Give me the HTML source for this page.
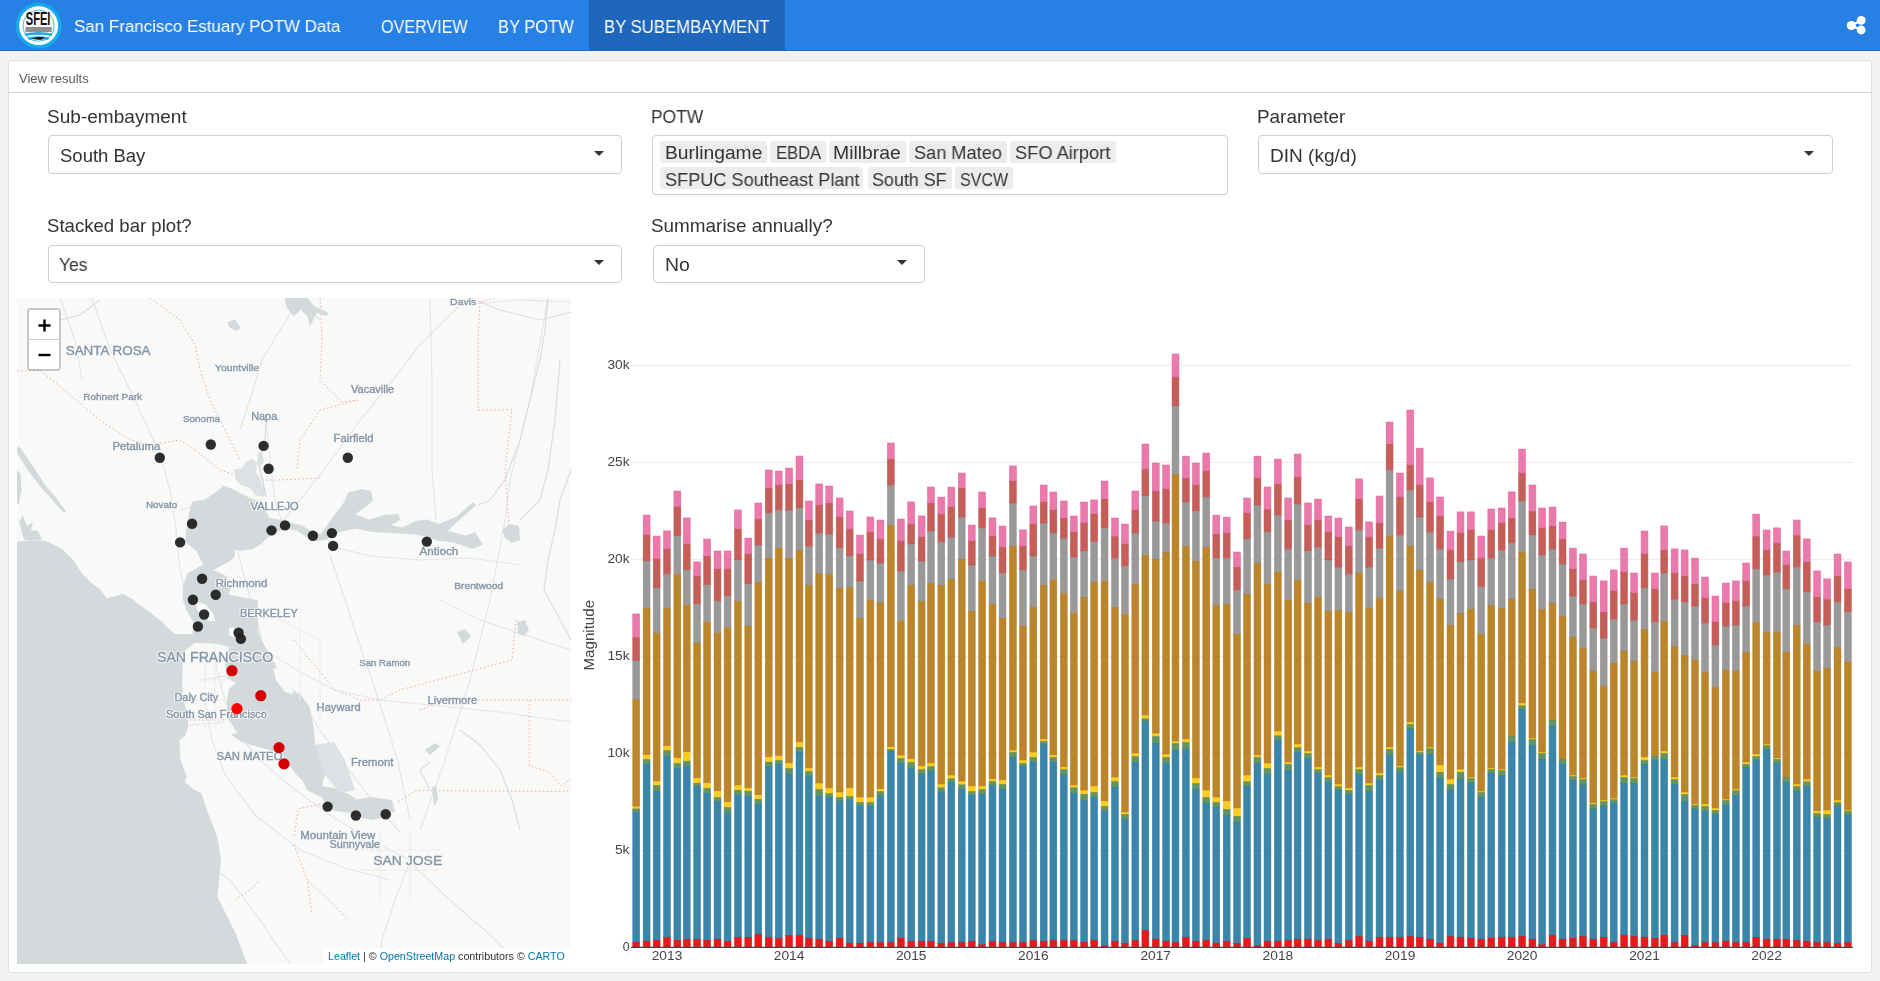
<!DOCTYPE html>
<html><head><meta charset="utf-8">
<style>
*{box-sizing:border-box;margin:0;padding:0}
html,body{width:1880px;height:981px;overflow:hidden;background:#f2f2f2;font-family:"Liberation Sans",sans-serif;color:#333}
.abs{position:absolute}
.t{position:absolute;white-space:nowrap;line-height:1;transform-origin:0 0;font-family:"Liberation Sans",sans-serif;will-change:transform}
#nav{position:absolute;left:0;top:0;width:1880px;height:51px;background:#2780e3;border-bottom:1px solid #1f6cc4}
#active{position:absolute;left:589px;top:0;width:196px;height:50px;background:#1f67bd}
.navt{position:absolute;color:#fff;white-space:nowrap;line-height:1}
#card{position:absolute;left:8px;top:60px;width:1864px;height:913px;background:#fff;border:1px solid #dfdfdf;border-radius:3px}
#hdr{position:absolute;left:0;top:0;width:1862px;height:32px;border-bottom:1px solid #d6d6d6}
.lbl{position:absolute;white-space:nowrap;font-size:18.5px;color:#333;line-height:1}
.sel{position:absolute;background:#fff;border:1px solid #cfcfcf;border-radius:4px}
.val{position:absolute;white-space:nowrap;font-size:18.5px;color:#333;line-height:1}
.caret{position:absolute;width:0;height:0;border-left:5px solid transparent;border-right:5px solid transparent;border-top:5px solid #333}
.tag{position:absolute;height:21.7px;background:#ececec;border-radius:3px;font-size:18.5px;line-height:21px;color:#333;text-align:center;white-space:nowrap;overflow:visible}
#map{position:absolute;left:17px;top:298px;width:554px;height:666px;overflow:hidden;background:#f9f9f8;will-change:transform}
svg text{font-family:"Liberation Sans",sans-serif}
</style></head><body>
<div id="nav">
  <div id="active"></div>
  <svg class="abs" style="left:15px;top:2px" width="48" height="48" viewBox="0 0 48 48">
    <circle cx="23.6" cy="23.7" r="23" fill="#14a9ec"/>
    <circle cx="23.6" cy="23.7" r="19.5" fill="#fff"/>
    <circle cx="23.6" cy="23.7" r="15.6" fill="none" stroke="#2bb3ee" stroke-width="0.9"/>
    <text x="10.8" y="22.6" textLength="24.6" lengthAdjust="spacingAndGlyphs" font-size="18" font-weight="bold" fill="#111" style="font-family:'Liberation Sans'">SFEI</text>
    <rect x="10.5" y="25" width="26.2" height="5" fill="#6a6a6a" opacity="0.75"/>
    <path d="M9.5 31.5 Q23.6 28.5 37.5 31.5 L36.5 34 Q23.6 31.5 10.5 34 Z" fill="#1aa9e8"/>
    <path d="M12.5 35.5 Q23.6 33 34.5 35.5 L33 38 Q23.6 36 14 38 Z" fill="#1aa9e8"/>
    <path d="M17 36.6 Q22 34.5 28 35.3 Q30 36 28 37.2 Q22 38.5 17 36.6 Z" fill="#111"/>
  </svg>
  <svg class="abs" style="left:1845px;top:14px" width="24" height="24" viewBox="0 0 24 24">
    <line x1="6.4" y1="11.5" x2="16.2" y2="6.4" stroke="#fff" stroke-width="2"/>
    <line x1="6.4" y1="11.5" x2="16.2" y2="16" stroke="#fff" stroke-width="2"/>
    <circle cx="6.4" cy="11.5" r="4.6" fill="#fff"/>
    <circle cx="16.2" cy="6.4" r="4.4" fill="#fff"/>
    <circle cx="16.2" cy="16" r="4.4" fill="#fff"/>
  </svg>
</div>

<div id="card"><div id="hdr"></div></div>

<div class="sel" style="left:47.5px;top:135px;width:574.5px;height:38.5px"></div>
<div class="caret" style="left:594px;top:151px"></div>

<div class="sel" style="left:651.8px;top:135px;width:576.2px;height:59.5px"></div>
<div class="tag" style="left:660.3px;top:141.1px;width:106.6px"></div><div class="tag" style="left:770.2px;top:141.1px;width:55.4px"></div><div class="tag" style="left:829.2px;top:141.1px;width:76.5px"></div><div class="tag" style="left:909.0px;top:141.1px;width:97.6px"></div><div class="tag" style="left:1010.0px;top:141.1px;width:105.5px"></div><div class="tag" style="left:660.3px;top:167.2px;width:203.2px"></div><div class="tag" style="left:867.5px;top:167.2px;width:84.1px"></div><div class="tag" style="left:955.2px;top:167.2px;width:57.4px"></div>

<div class="sel" style="left:1258px;top:135px;width:574.5px;height:38.5px"></div>
<div class="caret" style="left:1804px;top:151px"></div>

<div class="sel" style="left:47.5px;top:244.5px;width:574.5px;height:38px"></div>
<div class="caret" style="left:594px;top:260px"></div>

<div class="sel" style="left:652.5px;top:244.5px;width:272.5px;height:38px"></div>
<div class="caret" style="left:897px;top:260px"></div>

<div id="map">
<svg width="554" height="666" viewBox="17 298 554 666" style="position:absolute;left:0;top:0">
<path d="M215.0,660.0 L222.0,690.0 L235.0,730.0 L260.0,760.0 L295.0,790.0 L330.0,815.0 L370.0,840.0 L410.0,860.0" fill="none" stroke="#e4e5e6" stroke-width="1.2" />
<path d="M205.0,700.0 L212.0,740.0 L225.0,775.0 L255.0,815.0 L300.0,850.0 L345.0,868.0 L390.0,880.0" fill="none" stroke="#e4e5e6" stroke-width="1.2" />
<path d="M262.0,650.0 L280.0,672.0 L300.0,698.0 L320.0,730.0 L345.0,765.0 L372.0,800.0 L400.0,832.0" fill="none" stroke="#e4e5e6" stroke-width="1.2" />
<path d="M330.0,556.0 L345.0,600.0 L358.0,640.0 L372.0,680.0 L385.0,720.0 L398.0,762.0 L410.0,820.0" fill="none" stroke="#e4e5e6" stroke-width="1.2" />
<path d="M268.0,652.0 L300.0,672.0 L335.0,690.0 L380.0,700.0 L440.0,706.0 L500.0,712.0 L571.0,722.0" fill="none" stroke="#e4e5e6" stroke-width="1.2" />
<path d="M330.0,546.0 L370.0,556.0 L420.0,560.0 L470.0,558.0 L520.0,565.0" fill="none" stroke="#e4e5e6" stroke-width="1.2" />
<path d="M282.0,522.0 L300.0,500.0 L335.0,455.0 L360.0,420.0 L385.0,390.0 L420.0,345.0 L460.0,305.0 L520.0,300.0 L571.0,302.0" fill="none" stroke="#e4e5e6" stroke-width="1.2" />
<path d="M188.0,604.0 L180.0,570.0 L176.0,530.0 L170.0,490.0 L160.0,455.0 L135.0,400.0 L110.0,350.0 L92.0,298.0" fill="none" stroke="#e4e5e6" stroke-width="1.2" />
<path d="M180.0,510.0 L215.0,500.0 L262.0,500.0" fill="none" stroke="#e4e5e6" stroke-width="1.2" />
<path d="M266.0,420.0 L270.0,460.0 L275.0,500.0 L282.0,522.0" fill="none" stroke="#e4e5e6" stroke-width="1.2" />
<path d="M410.0,862.0 L395.0,900.0 L382.0,940.0 L378.0,964.0" fill="none" stroke="#e4e5e6" stroke-width="1.2" />
<path d="M410.0,862.0 L450.0,900.0 L490.0,935.0 L520.0,964.0" fill="none" stroke="#e4e5e6" stroke-width="1.2" />
<path d="M230.0,520.0 L240.0,560.0 L250.0,598.0 L258.0,630.0" fill="none" stroke="#e4e5e6" stroke-width="1.2" />
<path d="M430.0,298.0 L432.0,380.0 L432.0,470.0 L436.0,520.0" fill="none" stroke="#e4e5e6" stroke-width="1.2" />
<path d="M548.0,298.0 L530.0,400.0 L510.0,480.0 L505.0,520.0 L490.0,600.0 L470.0,680.0 L445.0,760.0 L420.0,830.0" fill="none" stroke="#e4e5e6" stroke-width="1.2" />
<path d="M300.0,298.0 L280.0,330.0 L262.0,360.0 L250.0,400.0 L240.0,430.0" fill="none" stroke="#e4e5e6" stroke-width="1.2" />
<path d="M60.0,298.0 L75.0,340.0 L82.0,380.0" fill="none" stroke="#e4e5e6" stroke-width="1.2" />
<path d="M440.0,600.0 L480.0,620.0 L540.0,640.0 L571.0,650.0" fill="none" stroke="#e4e5e6" stroke-width="1.2" />
<path d="M200.0,860.0 L230.0,880.0 L260.0,920.0 L290.0,964.0" fill="none" stroke="#e4e5e6" stroke-width="1.2" />
<path d="M190.0,725.0 L225.0,722.0" fill="none" stroke="#e4e5e6" stroke-width="1.2" />
<path d="M200.0,680.0 L225.0,676.0" fill="none" stroke="#e4e5e6" stroke-width="1.2" />
<path d="M230.0,600.0 L255.0,612.0 L262.0,640.0" fill="none" stroke="#e4e5e6" stroke-width="1.2" />
<path d="M470.0,298.0 L500.0,310.0 L540.0,320.0 L571.0,312.0" fill="none" stroke="#d9dee1" stroke-width="1.2" />
<path d="M548.0,298.0 L545.0,330.0 L540.0,360.0 L530.0,400.0 L520.0,440.0 L505.0,480.0 L490.0,500.0 L478.0,505.0" fill="none" stroke="#d9dee1" stroke-width="1.2" />
<path d="M560.0,360.0 L555.0,420.0 L548.0,470.0 L540.0,500.0 L520.0,520.0" fill="none" stroke="#d9dee1" stroke-width="1.2" />
<path d="M571.0,470.0 L560.0,500.0 L555.0,530.0 L548.0,560.0 L544.0,590.0 L560.0,620.0 L571.0,640.0" fill="none" stroke="#d9dee1" stroke-width="1.2" />
<path d="M460.0,730.0 L480.0,745.0 L500.0,770.0 L512.0,800.0 L520.0,830.0" fill="none" stroke="#d9dee1" stroke-width="1.2" />
<path d="M430.0,762.0 L420.0,770.0 L430.0,790.0" fill="none" stroke="#d9dee1" stroke-width="1.2" />
<path d="M300.0,298.0 L310.0,310.0 L320.0,320.0" fill="none" stroke="#d9dee1" stroke-width="1.2" />
<path d="M60.0,320.0 L80.0,315.0 L100.0,300.0" fill="none" stroke="#d9dee1" stroke-width="1.2" />
<path d="M17.0,371.0 L40.0,370.0 L70.0,395.0 L100.0,420.0 L130.0,440.0 L150.0,445.0 L180.0,440.0 L195.0,450.0" fill="none" stroke="#e8aaaa" stroke-width="1" stroke-dasharray="1.5,2.5"/>
<path d="M150.0,298.0 L180.0,320.0 L195.0,345.0 L200.0,370.0 L210.0,400.0 L225.0,430.0 L240.0,460.0" fill="none" stroke="#e8aaaa" stroke-width="1" stroke-dasharray="1.5,2.5"/>
<path d="M195.0,450.0 L220.0,470.0 L250.0,480.0 L280.0,480.0 L320.0,478.0" fill="none" stroke="#e8aaaa" stroke-width="1" stroke-dasharray="1.5,2.5"/>
<path d="M320.0,298.0 L322.0,340.0 L320.0,380.0 L342.0,402.0 L358.0,400.0 L320.0,410.0 L300.0,440.0 L297.0,470.0" fill="none" stroke="#e8aaaa" stroke-width="1" stroke-dasharray="1.5,2.5"/>
<path d="M495.0,298.0 L480.0,302.0 L478.0,340.0 L478.0,410.0 L500.0,410.0 L512.0,410.0 L505.0,470.0 L510.0,540.0" fill="none" stroke="#e8aaaa" stroke-width="1" stroke-dasharray="1.5,2.5"/>
<path d="M516.0,620.0 L512.0,660.0 L400.0,690.0 L380.0,700.0" fill="none" stroke="#e8aaaa" stroke-width="1" stroke-dasharray="1.5,2.5"/>
<path d="M294.0,640.0 L310.0,660.0 L335.0,690.0 L360.0,700.0 L380.0,700.0" fill="none" stroke="#e8aaaa" stroke-width="1" stroke-dasharray="1.5,2.5"/>
<path d="M420.0,710.0 L445.0,700.0 L571.0,700.0" fill="none" stroke="#e8aaaa" stroke-width="1" stroke-dasharray="1.5,2.5"/>
<path d="M398.1,801.8 L416.2,790.5 L561.0,791.6 L571.0,790.5" fill="none" stroke="#e8aaaa" stroke-width="1" stroke-dasharray="1.5,2.5"/>
<path d="M529.3,700.0 L529.3,765.6 L549.7,772.4 L561.0,786.0 L571.0,779.2" fill="none" stroke="#e8aaaa" stroke-width="1" stroke-dasharray="1.5,2.5"/>
<path d="M294.0,835.8 L298.5,808.6 L321.2,804.1" fill="none" stroke="#e8aaaa" stroke-width="1" stroke-dasharray="1.5,2.5"/>
<path d="M294.0,844.8 L300.8,862.9 L307.6,881.0 L312.1,915.0" fill="none" stroke="#e8aaaa" stroke-width="1" stroke-dasharray="1.5,2.5"/>
<path d="M307.6,881.0 L328.0,899.1 L350.6,922.0" fill="none" stroke="#e8aaaa" stroke-width="1" stroke-dasharray="1.5,2.5"/>
<path d="M190.0,720.0 L225.0,720.0" fill="none" stroke="#e8aaaa" stroke-width="1" stroke-dasharray="1.5,2.5"/>
<path d="M235.0,900.0 L250.0,890.0 L260.0,880.0" fill="none" stroke="#e8aaaa" stroke-width="1" stroke-dasharray="1.5,2.5"/>
<path d="M17.0,542.1 L30.5,539.9 L46.1,541.0 L61.8,548.8 L73.1,560.0 L82.0,573.5 L91.0,582.5 L100.0,589.2 L106.7,598.2 L115.7,595.9 L122.4,593.7 L131.3,598.2 L142.6,607.1 L160.5,620.6 L174.7,634.0 L187.4,634.0 L192.6,634.0 L193.4,622.6 L186.9,611.2 L182.9,600.0 L182.9,587.0 L187.4,573.5 L203.1,564.5 L196.4,551.1 L185.2,542.1 L187.4,519.7 L191.9,501.7 L205.0,499.4 L219.7,489.3 L223.4,485.6 L230.7,488.3 L245.4,495.7 L258.3,502.1 L265.6,510.4 L269.3,517.7 L278.4,519.5 L289.4,522.3 L300.5,525.0 L311.5,530.6 L320.6,534.2 L323.4,530.9 L330.2,520.7 L343.8,502.6 L348.3,492.4 L361.9,489.0 L370.9,491.3 L373.2,500.4 L364.2,508.3 L355.1,513.9 L368.7,519.6 L384.5,515.1 L398.1,513.9 L400.4,519.6 L391.3,525.3 L402.6,527.5 L416.2,520.7 L427.5,519.6 L438.8,524.1 L456.9,516.2 L472.8,502.6 L476.2,504.9 L456.9,521.9 L447.9,530.9 L466.0,535.4 L475.0,532.0 L483.0,544.5 L472.8,549.0 L452.4,542.2 L438.8,541.1 L425.3,536.6 L413.9,534.3 L395.8,533.2 L373.2,532.0 L355.1,528.7 L339.3,532.0 L325.7,540.0 L316.6,541.1 L307.8,537.9 L296.8,530.6 L285.8,529.6 L276.6,531.5 L267.4,537.9 L261.9,543.4 L252.8,548.9 L241.7,550.7 L234.4,549.8 L235.3,556.2 L228.9,561.7 L221.6,565.4 L213.3,570.0 L219.7,572.8 L227.1,576.4 L230.7,587.4 L228.9,594.8 L238.1,596.6 L249.1,598.4 L257.9,600.6 L257.9,630.8 L262.0,641.0 L268.0,652.0 L274.8,663.0 L278.4,674.0 L289.4,679.5 L291.3,690.6 L300.5,694.2 L309.6,707.1 L313.3,725.4 L315.1,743.8 L322.5,758.4 L328.0,767.9 L323.4,779.2 L322.3,786.0 L334.7,788.3 L350.6,795.0 L359.6,801.8 L368.7,801.8 L380.0,804.1 L391.3,806.4 L391.3,815.4 L373.2,819.9 L361.9,817.7 L350.6,813.1 L334.7,810.9 L328.0,806.4 L321.2,797.3 L307.6,790.5 L302.3,780.5 L296.8,775.0 L289.4,765.8 L282.1,754.8 L267.4,749.3 L252.8,745.6 L241.7,741.9 L230.7,734.6 L238.1,732.8 L232.6,725.4 L227.1,718.1 L227.1,699.7 L228.9,688.7 L236.2,683.2 L227.1,677.7 L225.2,664.9 L229.3,647.1 L217.1,643.8 L194.3,643.0 L183.0,652.0 L182.1,685.0 L183.0,699.7 L186.7,710.7 L188.5,725.4 L184.9,736.4 L179.4,740.1 L180.3,758.4 L186.7,776.8 L184.9,782.3 L194.0,789.6 L201.4,793.3 L206.9,810.0 L217.4,837.5 L221.0,859.7 L217.4,896.8 L236.0,934.0 L247.0,964.0 L17.0,964.0 Z" fill="#d4dadc"/>
<path d="M234.0,470.0 L242.0,468.0 L246.0,462.0 L252.0,459.0 L257.0,463.0 L256.0,472.0 L260.0,478.0 L262.0,486.0 L266.0,490.0 L264.0,497.0 L255.0,495.0 L250.0,488.0 L244.0,486.0 L238.0,483.0 L235.0,477.0 Z" fill="#dde1e3"/>
<path d="M257.0,453.0 L262.0,452.0 L264.0,462.0 L260.0,466.0 Z" fill="#dde1e3"/>
<path d="M253.0,488.0 L258.0,486.0 L263.0,493.0 L256.0,494.0 Z" fill="#dde1e3"/>
<path d="M266.0,423.0 L265.0,440.0 L262.0,452.0 L258.0,462.0 L262.0,478.0 L266.0,497.0" fill="none" stroke="#d4dadc" stroke-width="1.3" />
<path d="M315.0,745.0 L334.0,742.0 L345.0,760.0 L355.0,790.0 L340.0,793.0 L325.0,775.0 Z" fill="#dde1e3"/>
<path d="M17.0,446.8 L19.5,446.8 L31.7,464.6 L45.1,484.8 L56.4,498.3 L66.3,511.7 L64.1,513.1 L53.9,501.7 L40.4,487.1 L27.0,468.9 L17.0,452.7 Z" fill="#d4dadc"/>
<path d="M17.0,470.0 L20.5,474.0 L21.5,490.0 L19.0,504.0 L17.0,504.0 Z" fill="#d4dadc"/>
<path d="M19.0,522.0 L23.0,515.0 L27.0,526.0 L33.0,522.0 L31.0,530.0 L38.0,531.0 L42.0,540.0 L24.0,540.0 Z" fill="#d4dadc"/>
<path d="M285.0,298.0 L307.6,298.0 L314.4,306.0 L328.0,312.8 L326.8,316.4 L316.6,312.8 L312.1,322.2 L309.8,326.5 L307.6,316.4 L300.5,309.6 L294.0,316.6 L290.0,312.0 L286.0,306.0 Z" fill="#d4dadc"/>
<path d="M227.5,322.0 L235.0,319.5 L241.0,328.0 L236.0,331.0 L229.0,327.0 Z" fill="#d4dadc"/>
<path d="M502.0,530.0 L510.0,524.0 L519.0,526.0 L520.0,540.0 L512.0,543.0 L505.0,538.0 Z" fill="#d4dadc"/>
<path d="M517.0,622.0 L525.0,620.0 L529.0,630.0 L524.0,636.0 L518.0,634.0 Z" fill="#d4dadc"/>
<path d="M457.0,632.0 L465.0,629.0 L471.0,636.0 L463.0,644.0 Z" fill="#d4dadc"/>
<path d="M425.0,750.0 L435.0,743.0 L440.0,746.0 L430.0,755.0 Z" fill="#d4dadc"/>
<path d="M432.0,788.0 L436.0,785.0 L438.0,800.0 L434.0,806.0 Z" fill="#d4dadc"/>
<path d="M355.0,800.0 L370.0,797.0 L392.0,800.0 L395.0,812.0 L375.0,815.0 Z" fill="#d4dadc"/>
<path d="M195.9,600.6 L205.7,604.7 L213.0,613.7 L215.5,621.0 L208.9,621.0 L200.8,616.1 L196.7,608.8 Z" fill="#f9f9f8"/>
<path d="M229.0,628.0 L234.0,627.0 L236.0,633.0 L233.0,637.0 L229.0,635.0 Z" fill="#f9f9f8"/>
<path d="M273.0,668.0 L282.0,670.0 L292.0,684.0 L293.0,694.0 L285.0,692.0 L276.0,680.0 Z" fill="#f9f9f8"/>
<line x1="194" y1="660" x2="225" y2="660" stroke="#ebebeb" stroke-width="1"/>
<line x1="194" y1="680" x2="225" y2="680" stroke="#ebebeb" stroke-width="1"/>
<line x1="190" y1="700" x2="227" y2="700" stroke="#ebebeb" stroke-width="1"/>
<line x1="205" y1="645" x2="205" y2="730" stroke="#ebebeb" stroke-width="1"/>
<line x1="215" y1="645" x2="215" y2="730" stroke="#ebebeb" stroke-width="1"/>
<line x1="360" y1="850" x2="440" y2="850" stroke="#ebebeb" stroke-width="1"/>
<line x1="360" y1="870" x2="440" y2="870" stroke="#ebebeb" stroke-width="1"/>
<line x1="380" y1="830" x2="380" y2="900" stroke="#ebebeb" stroke-width="1"/>
<line x1="410" y1="830" x2="410" y2="900" stroke="#ebebeb" stroke-width="1"/>
<line x1="260" y1="610" x2="320" y2="640" stroke="#ebebeb" stroke-width="1"/>
<line x1="300" y1="620" x2="300" y2="700" stroke="#ebebeb" stroke-width="1"/>
<line x1="320" y1="640" x2="320" y2="720" stroke="#ebebeb" stroke-width="1"/>
<text x="65.7" y="355.3" textLength="84.9" lengthAdjust="spacingAndGlyphs" font-size="13" fill="none" stroke="#fafafa" stroke-width="2.2" stroke-linejoin="round" style="font-family:'Liberation Sans'">SANTA ROSA</text>
<text x="65.7" y="355.3" textLength="84.9" lengthAdjust="spacingAndGlyphs" font-size="13" fill="#8494a6" stroke="#8494a6" stroke-width="0.35" style="font-family:'Liberation Sans'">SANTA ROSA</text>
<text x="215" y="370.9" textLength="44" lengthAdjust="spacingAndGlyphs" font-size="9.5" fill="none" stroke="#fafafa" stroke-width="2.2" stroke-linejoin="round" style="font-family:'Liberation Sans'">Yountville</text>
<text x="215" y="370.9" textLength="44" lengthAdjust="spacingAndGlyphs" font-size="9.5" fill="#8494a6" stroke="#8494a6" stroke-width="0.35" style="font-family:'Liberation Sans'">Yountville</text>
<text x="83.3" y="399.8" textLength="58.8" lengthAdjust="spacingAndGlyphs" font-size="9.5" fill="none" stroke="#fafafa" stroke-width="2.2" stroke-linejoin="round" style="font-family:'Liberation Sans'">Rohnert Park</text>
<text x="83.3" y="399.8" textLength="58.8" lengthAdjust="spacingAndGlyphs" font-size="9.5" fill="#8494a6" stroke="#8494a6" stroke-width="0.35" style="font-family:'Liberation Sans'">Rohnert Park</text>
<text x="182.9" y="422" textLength="37.1" lengthAdjust="spacingAndGlyphs" font-size="9.5" fill="none" stroke="#fafafa" stroke-width="2.2" stroke-linejoin="round" style="font-family:'Liberation Sans'">Sonoma</text>
<text x="182.9" y="422" textLength="37.1" lengthAdjust="spacingAndGlyphs" font-size="9.5" fill="#8494a6" stroke="#8494a6" stroke-width="0.35" style="font-family:'Liberation Sans'">Sonoma</text>
<text x="251.2" y="420.2" textLength="26" lengthAdjust="spacingAndGlyphs" font-size="10.5" fill="none" stroke="#fafafa" stroke-width="2.2" stroke-linejoin="round" style="font-family:'Liberation Sans'">Napa</text>
<text x="251.2" y="420.2" textLength="26" lengthAdjust="spacingAndGlyphs" font-size="10.5" fill="#8494a6" stroke="#8494a6" stroke-width="0.35" style="font-family:'Liberation Sans'">Napa</text>
<text x="112.5" y="449.6" textLength="47.7" lengthAdjust="spacingAndGlyphs" font-size="10.5" fill="none" stroke="#fafafa" stroke-width="2.2" stroke-linejoin="round" style="font-family:'Liberation Sans'">Petaluma</text>
<text x="112.5" y="449.6" textLength="47.7" lengthAdjust="spacingAndGlyphs" font-size="10.5" fill="#8494a6" stroke="#8494a6" stroke-width="0.35" style="font-family:'Liberation Sans'">Petaluma</text>
<text x="146" y="508" textLength="31.2" lengthAdjust="spacingAndGlyphs" font-size="9.3" fill="none" stroke="#fafafa" stroke-width="2.2" stroke-linejoin="round" style="font-family:'Liberation Sans'">Novato</text>
<text x="146" y="508" textLength="31.2" lengthAdjust="spacingAndGlyphs" font-size="9.3" fill="#8494a6" stroke="#8494a6" stroke-width="0.35" style="font-family:'Liberation Sans'">Novato</text>
<text x="250.6" y="510" textLength="48" lengthAdjust="spacingAndGlyphs" font-size="10.6" fill="none" stroke="#fafafa" stroke-width="2.2" stroke-linejoin="round" style="font-family:'Liberation Sans'">VALLEJO</text>
<text x="250.6" y="510" textLength="48" lengthAdjust="spacingAndGlyphs" font-size="10.6" fill="#8494a6" stroke="#8494a6" stroke-width="0.35" style="font-family:'Liberation Sans'">VALLEJO</text>
<text x="450.1" y="305.2" textLength="26.1" lengthAdjust="spacingAndGlyphs" font-size="9.8" fill="none" stroke="#fafafa" stroke-width="2.2" stroke-linejoin="round" style="font-family:'Liberation Sans'">Davis</text>
<text x="450.1" y="305.2" textLength="26.1" lengthAdjust="spacingAndGlyphs" font-size="9.8" fill="#8494a6" stroke="#8494a6" stroke-width="0.35" style="font-family:'Liberation Sans'">Davis</text>
<text x="351" y="392.6" textLength="43.2" lengthAdjust="spacingAndGlyphs" font-size="10.2" fill="none" stroke="#fafafa" stroke-width="2.2" stroke-linejoin="round" style="font-family:'Liberation Sans'">Vacaville</text>
<text x="351" y="392.6" textLength="43.2" lengthAdjust="spacingAndGlyphs" font-size="10.2" fill="#8494a6" stroke="#8494a6" stroke-width="0.35" style="font-family:'Liberation Sans'">Vacaville</text>
<text x="333.6" y="442.4" textLength="40" lengthAdjust="spacingAndGlyphs" font-size="10.3" fill="none" stroke="#fafafa" stroke-width="2.2" stroke-linejoin="round" style="font-family:'Liberation Sans'">Fairfield</text>
<text x="333.6" y="442.4" textLength="40" lengthAdjust="spacingAndGlyphs" font-size="10.3" fill="#8494a6" stroke="#8494a6" stroke-width="0.35" style="font-family:'Liberation Sans'">Fairfield</text>
<text x="419.6" y="555.1" textLength="38.5" lengthAdjust="spacingAndGlyphs" font-size="10.3" fill="none" stroke="#fafafa" stroke-width="2.2" stroke-linejoin="round" style="font-family:'Liberation Sans'">Antioch</text>
<text x="419.6" y="555.1" textLength="38.5" lengthAdjust="spacingAndGlyphs" font-size="10.3" fill="#8494a6" stroke="#8494a6" stroke-width="0.35" style="font-family:'Liberation Sans'">Antioch</text>
<text x="454.2" y="589" textLength="49" lengthAdjust="spacingAndGlyphs" font-size="9.4" fill="none" stroke="#fafafa" stroke-width="2.2" stroke-linejoin="round" style="font-family:'Liberation Sans'">Brentwood</text>
<text x="454.2" y="589" textLength="49" lengthAdjust="spacingAndGlyphs" font-size="9.4" fill="#8494a6" stroke="#8494a6" stroke-width="0.35" style="font-family:'Liberation Sans'">Brentwood</text>
<text x="215.7" y="587.4" textLength="51.7" lengthAdjust="spacingAndGlyphs" font-size="10.6" fill="none" stroke="#fafafa" stroke-width="2.2" stroke-linejoin="round" style="font-family:'Liberation Sans'">Richmond</text>
<text x="215.7" y="587.4" textLength="51.7" lengthAdjust="spacingAndGlyphs" font-size="10.6" fill="#8494a6" stroke="#8494a6" stroke-width="0.35" style="font-family:'Liberation Sans'">Richmond</text>
<text x="239.9" y="617.2" textLength="57.8" lengthAdjust="spacingAndGlyphs" font-size="10.6" fill="none" stroke="#fafafa" stroke-width="2.2" stroke-linejoin="round" style="font-family:'Liberation Sans'">BERKELEY</text>
<text x="239.9" y="617.2" textLength="57.8" lengthAdjust="spacingAndGlyphs" font-size="10.6" fill="#8494a6" stroke="#8494a6" stroke-width="0.35" style="font-family:'Liberation Sans'">BERKELEY</text>
<text x="157" y="661.6" textLength="116.3" lengthAdjust="spacingAndGlyphs" font-size="14" fill="none" stroke="#fafafa" stroke-width="2.2" stroke-linejoin="round" style="font-family:'Liberation Sans'">SAN FRANCISCO</text>
<text x="157" y="661.6" textLength="116.3" lengthAdjust="spacingAndGlyphs" font-size="14" fill="#8494a6" stroke="#8494a6" stroke-width="0.35" style="font-family:'Liberation Sans'">SAN FRANCISCO</text>
<text x="359.2" y="666" textLength="51" lengthAdjust="spacingAndGlyphs" font-size="9.3" fill="none" stroke="#fafafa" stroke-width="2.2" stroke-linejoin="round" style="font-family:'Liberation Sans'">San Ramon</text>
<text x="359.2" y="666" textLength="51" lengthAdjust="spacingAndGlyphs" font-size="9.3" fill="#8494a6" stroke="#8494a6" stroke-width="0.35" style="font-family:'Liberation Sans'">San Ramon</text>
<text x="174.4" y="700.6" textLength="43.9" lengthAdjust="spacingAndGlyphs" font-size="10.2" fill="none" stroke="#fafafa" stroke-width="2.2" stroke-linejoin="round" style="font-family:'Liberation Sans'">Daly City</text>
<text x="174.4" y="700.6" textLength="43.9" lengthAdjust="spacingAndGlyphs" font-size="10.2" fill="#8494a6" stroke="#8494a6" stroke-width="0.35" style="font-family:'Liberation Sans'">Daly City</text>
<text x="427.5" y="704" textLength="49.8" lengthAdjust="spacingAndGlyphs" font-size="10.3" fill="none" stroke="#fafafa" stroke-width="2.2" stroke-linejoin="round" style="font-family:'Liberation Sans'">Livermore</text>
<text x="427.5" y="704" textLength="49.8" lengthAdjust="spacingAndGlyphs" font-size="10.3" fill="#8494a6" stroke="#8494a6" stroke-width="0.35" style="font-family:'Liberation Sans'">Livermore</text>
<text x="316.6" y="710.9" textLength="44" lengthAdjust="spacingAndGlyphs" font-size="10.5" fill="none" stroke="#fafafa" stroke-width="2.2" stroke-linejoin="round" style="font-family:'Liberation Sans'">Hayward</text>
<text x="316.6" y="710.9" textLength="44" lengthAdjust="spacingAndGlyphs" font-size="10.5" fill="#8494a6" stroke="#8494a6" stroke-width="0.35" style="font-family:'Liberation Sans'">Hayward</text>
<text x="166.1" y="717.7" textLength="100.7" lengthAdjust="spacingAndGlyphs" font-size="10.1" fill="none" stroke="#fafafa" stroke-width="2.2" stroke-linejoin="round" style="font-family:'Liberation Sans'">South San Francisco</text>
<text x="166.1" y="717.7" textLength="100.7" lengthAdjust="spacingAndGlyphs" font-size="10.1" fill="#8494a6" stroke="#8494a6" stroke-width="0.35" style="font-family:'Liberation Sans'">South San Francisco</text>
<text x="216.6" y="759.7" textLength="65.9" lengthAdjust="spacingAndGlyphs" font-size="11" fill="none" stroke="#fafafa" stroke-width="2.2" stroke-linejoin="round" style="font-family:'Liberation Sans'">SAN MATEO</text>
<text x="216.6" y="759.7" textLength="65.9" lengthAdjust="spacingAndGlyphs" font-size="11" fill="#8494a6" stroke="#8494a6" stroke-width="0.35" style="font-family:'Liberation Sans'">SAN MATEO</text>
<text x="351" y="765.6" textLength="42.5" lengthAdjust="spacingAndGlyphs" font-size="10.6" fill="none" stroke="#fafafa" stroke-width="2.2" stroke-linejoin="round" style="font-family:'Liberation Sans'">Fremont</text>
<text x="351" y="765.6" textLength="42.5" lengthAdjust="spacingAndGlyphs" font-size="10.6" fill="#8494a6" stroke="#8494a6" stroke-width="0.35" style="font-family:'Liberation Sans'">Fremont</text>
<text x="300.3" y="838.5" textLength="75" lengthAdjust="spacingAndGlyphs" font-size="10.7" fill="none" stroke="#fafafa" stroke-width="2.2" stroke-linejoin="round" style="font-family:'Liberation Sans'">Mountain View</text>
<text x="300.3" y="838.5" textLength="75" lengthAdjust="spacingAndGlyphs" font-size="10.7" fill="#8494a6" stroke="#8494a6" stroke-width="0.35" style="font-family:'Liberation Sans'">Mountain View</text>
<text x="329.5" y="848.2" textLength="50.5" lengthAdjust="spacingAndGlyphs" font-size="10.1" fill="none" stroke="#fafafa" stroke-width="2.2" stroke-linejoin="round" style="font-family:'Liberation Sans'">Sunnyvale</text>
<text x="329.5" y="848.2" textLength="50.5" lengthAdjust="spacingAndGlyphs" font-size="10.1" fill="#8494a6" stroke="#8494a6" stroke-width="0.35" style="font-family:'Liberation Sans'">Sunnyvale</text>
<text x="373.2" y="864.7" textLength="69" lengthAdjust="spacingAndGlyphs" font-size="13.6" fill="none" stroke="#fafafa" stroke-width="2.2" stroke-linejoin="round" style="font-family:'Liberation Sans'">SAN JOSE</text>
<text x="373.2" y="864.7" textLength="69" lengthAdjust="spacingAndGlyphs" font-size="13.6" fill="#8494a6" stroke="#8494a6" stroke-width="0.35" style="font-family:'Liberation Sans'">SAN JOSE</text>
<circle cx="159.8" cy="457.7" r="5.2" fill="#222" fill-opacity="0.95"/>
<circle cx="210.8" cy="444.5" r="5.2" fill="#222" fill-opacity="0.95"/>
<circle cx="263.6" cy="445.9" r="5.2" fill="#222" fill-opacity="0.95"/>
<circle cx="268.6" cy="468.7" r="5.2" fill="#222" fill-opacity="0.95"/>
<circle cx="347.8" cy="457.7" r="5.2" fill="#222" fill-opacity="0.95"/>
<circle cx="192.1" cy="523.8" r="5.2" fill="#222" fill-opacity="0.95"/>
<circle cx="180.1" cy="542.4" r="5.2" fill="#222" fill-opacity="0.95"/>
<circle cx="271.5" cy="530.4" r="5.2" fill="#222" fill-opacity="0.95"/>
<circle cx="285" cy="525.4" r="5.2" fill="#222" fill-opacity="0.95"/>
<circle cx="312.9" cy="535.8" r="5.2" fill="#222" fill-opacity="0.95"/>
<circle cx="331.9" cy="533.1" r="5.2" fill="#222" fill-opacity="0.95"/>
<circle cx="333.1" cy="545.9" r="5.2" fill="#222" fill-opacity="0.95"/>
<circle cx="426.8" cy="541.6" r="5.2" fill="#222" fill-opacity="0.95"/>
<circle cx="202.1" cy="578.8" r="5.2" fill="#222" fill-opacity="0.95"/>
<circle cx="215.7" cy="594.7" r="5.2" fill="#222" fill-opacity="0.95"/>
<circle cx="192.9" cy="599.7" r="5.2" fill="#222" fill-opacity="0.95"/>
<circle cx="204.1" cy="614.5" r="5.2" fill="#222" fill-opacity="0.95"/>
<circle cx="197.9" cy="626.5" r="5.2" fill="#222" fill-opacity="0.95"/>
<circle cx="238.6" cy="632.7" r="5.2" fill="#222" fill-opacity="0.95"/>
<circle cx="240.9" cy="638.9" r="5.2" fill="#222" fill-opacity="0.95"/>
<circle cx="327.6" cy="806.6" r="5.2" fill="#222" fill-opacity="0.95"/>
<circle cx="355.9" cy="815.5" r="5.2" fill="#222" fill-opacity="0.95"/>
<circle cx="385.7" cy="814.3" r="5.2" fill="#222" fill-opacity="0.95"/>
<circle cx="232" cy="670.7" r="5.6" fill="#d40000"/>
<circle cx="260.8" cy="695.7" r="5.6" fill="#d40000"/>
<circle cx="279" cy="747.6" r="5.6" fill="#d40000"/>
<circle cx="284" cy="763.9" r="5.6" fill="#d40000"/>
<circle cx="237" cy="708.7" r="5.6" fill="#ff0000"/>
</svg>
<div style="position:absolute;left:10px;top:10px;width:34px;height:63px;border:2px solid rgba(0,0,0,0.2);border-radius:4px;background-clip:padding-box"><div style="position:absolute;left:0;top:0;width:30px;height:30px;background:#fff;border-bottom:1px solid #ccc;border-radius:2px 2px 0 0"></div><div style="position:absolute;left:0;top:30px;width:30px;height:29px;background:#fff;border-radius:0 0 2px 2px"></div><svg style="position:absolute;left:0;top:0" width="30" height="59"><path d="M9.5 15.5 H21.5 M15.5 9.5 V21.5" stroke="#000" stroke-width="2.4"/><path d="M9.5 45 H21.5" stroke="#000" stroke-width="2.4"/></svg></div>
<div style="position:absolute;right:0;bottom:0;height:16px;width:248px;background:rgba(255,255,255,0.8)"></div>
<div style="position:absolute;left:311px;top:653px;font-size:10.7px;line-height:1;white-space:nowrap;color:#333;font-family:'Liberation Sans'"><span style="color:#0078a8">Leaflet</span> | © <span style="color:#0078a8">OpenStreetMap</span> contributors © <span style="color:#0078a8">CARTO</span></div>
</div>

<svg class="abs" style="left:0;top:0;will-change:transform" width="1880" height="981" viewBox="0 0 1880 981" pointer-events="none">
<g><line x1="631" x2="1853" y1="850.4" y2="850.4" stroke="#ebebeb" stroke-width="1"/><line x1="631" x2="1853" y1="753.4" y2="753.4" stroke="#ebebeb" stroke-width="1"/><line x1="631" x2="1853" y1="656.4" y2="656.4" stroke="#ebebeb" stroke-width="1"/><line x1="631" x2="1853" y1="559.4" y2="559.4" stroke="#ebebeb" stroke-width="1"/><line x1="631" x2="1853" y1="462.4" y2="462.4" stroke="#ebebeb" stroke-width="1"/><line x1="631" x2="1853" y1="365.4" y2="365.4" stroke="#ebebeb" stroke-width="1"/></g>
<g><rect x="632.77" y="942.00" width="6.90" height="5.40" fill="#e41a1c" stroke="#e3100f" stroke-width="0.5"/>
<rect x="632.77" y="811.90" width="6.90" height="130.10" fill="#3a85a8" stroke="#2e7fab" stroke-width="0.5"/>
<rect x="632.77" y="808.20" width="6.90" height="3.70" fill="#629363" stroke="#58905e" stroke-width="0.5"/>
<rect x="632.77" y="806.20" width="6.90" height="2.00" fill="#fecb23" stroke="#ffc50f" stroke-width="0.5"/>
<rect x="632.77" y="699.10" width="6.90" height="107.10" fill="#bb852b" stroke="#b77c1d" stroke-width="0.5"/>
<rect x="632.77" y="660.70" width="6.90" height="38.40" fill="#999999" stroke="#949494" stroke-width="0.5"/>
<rect x="632.77" y="637.20" width="6.90" height="23.50" fill="#c55e58" stroke="#c4544f" stroke-width="0.5"/>
<rect x="632.77" y="613.90" width="6.90" height="23.30" fill="#e97aab" stroke="#e8639c" stroke-width="0.5"/>
<rect x="643.14" y="941.00" width="6.90" height="6.40" fill="#e41a1c" stroke="#e3100f" stroke-width="0.5"/>
<rect x="643.14" y="763.90" width="6.90" height="177.10" fill="#3a85a8" stroke="#2e7fab" stroke-width="0.5"/>
<rect x="643.14" y="759.00" width="6.90" height="4.90" fill="#629363" stroke="#58905e" stroke-width="0.5"/>
<rect x="643.14" y="754.60" width="6.90" height="4.40" fill="#fecb23" stroke="#ffc50f" stroke-width="0.5"/>
<rect x="643.14" y="607.80" width="6.90" height="146.80" fill="#bb852b" stroke="#b77c1d" stroke-width="0.5"/>
<rect x="643.14" y="560.90" width="6.90" height="46.90" fill="#999999" stroke="#949494" stroke-width="0.5"/>
<rect x="643.14" y="534.80" width="6.90" height="26.10" fill="#c55e58" stroke="#c4544f" stroke-width="0.5"/>
<rect x="643.14" y="515.00" width="6.90" height="19.80" fill="#e97aab" stroke="#e8639c" stroke-width="0.5"/>
<rect x="653.18" y="939.90" width="6.90" height="7.50" fill="#e41a1c" stroke="#e3100f" stroke-width="0.5"/>
<rect x="653.18" y="790.80" width="6.90" height="149.10" fill="#3a85a8" stroke="#2e7fab" stroke-width="0.5"/>
<rect x="653.18" y="785.00" width="6.90" height="5.80" fill="#629363" stroke="#58905e" stroke-width="0.5"/>
<rect x="653.18" y="781.00" width="6.90" height="4.00" fill="#fecb23" stroke="#ffc50f" stroke-width="0.5"/>
<rect x="653.18" y="632.60" width="6.90" height="148.40" fill="#bb852b" stroke="#b77c1d" stroke-width="0.5"/>
<rect x="653.18" y="587.80" width="6.90" height="44.80" fill="#999999" stroke="#949494" stroke-width="0.5"/>
<rect x="653.18" y="558.80" width="6.90" height="29.00" fill="#c55e58" stroke="#c4544f" stroke-width="0.5"/>
<rect x="653.18" y="536.00" width="6.90" height="22.80" fill="#e97aab" stroke="#e8639c" stroke-width="0.5"/>
<rect x="663.55" y="937.00" width="6.90" height="10.40" fill="#e41a1c" stroke="#e3100f" stroke-width="0.5"/>
<rect x="663.55" y="755.80" width="6.90" height="181.20" fill="#3a85a8" stroke="#2e7fab" stroke-width="0.5"/>
<rect x="663.55" y="750.00" width="6.90" height="5.80" fill="#629363" stroke="#58905e" stroke-width="0.5"/>
<rect x="663.55" y="745.80" width="6.90" height="4.20" fill="#fecb23" stroke="#ffc50f" stroke-width="0.5"/>
<rect x="663.55" y="607.80" width="6.90" height="138.00" fill="#bb852b" stroke="#b77c1d" stroke-width="0.5"/>
<rect x="663.55" y="573.90" width="6.90" height="33.90" fill="#999999" stroke="#949494" stroke-width="0.5"/>
<rect x="663.55" y="548.80" width="6.90" height="25.10" fill="#c55e58" stroke="#c4544f" stroke-width="0.5"/>
<rect x="663.55" y="530.90" width="6.90" height="17.90" fill="#e97aab" stroke="#e8639c" stroke-width="0.5"/>
<rect x="673.92" y="939.90" width="6.90" height="7.50" fill="#e41a1c" stroke="#e3100f" stroke-width="0.5"/>
<rect x="673.92" y="767.80" width="6.90" height="172.10" fill="#3a85a8" stroke="#2e7fab" stroke-width="0.5"/>
<rect x="673.92" y="763.00" width="6.90" height="4.80" fill="#629363" stroke="#58905e" stroke-width="0.5"/>
<rect x="673.92" y="757.80" width="6.90" height="5.20" fill="#fecb23" stroke="#ffc50f" stroke-width="0.5"/>
<rect x="673.92" y="573.90" width="6.90" height="183.90" fill="#bb852b" stroke="#b77c1d" stroke-width="0.5"/>
<rect x="673.92" y="535.80" width="6.90" height="38.10" fill="#999999" stroke="#949494" stroke-width="0.5"/>
<rect x="673.92" y="506.70" width="6.90" height="29.10" fill="#c55e58" stroke="#c4544f" stroke-width="0.5"/>
<rect x="673.92" y="491.00" width="6.90" height="15.70" fill="#e97aab" stroke="#e8639c" stroke-width="0.5"/>
<rect x="683.29" y="939.00" width="6.90" height="8.40" fill="#e41a1c" stroke="#e3100f" stroke-width="0.5"/>
<rect x="683.29" y="765.90" width="6.90" height="173.10" fill="#3a85a8" stroke="#2e7fab" stroke-width="0.5"/>
<rect x="683.29" y="760.70" width="6.90" height="5.20" fill="#629363" stroke="#58905e" stroke-width="0.5"/>
<rect x="683.29" y="751.70" width="6.90" height="9.00" fill="#fecb23" stroke="#ffc50f" stroke-width="0.5"/>
<rect x="683.29" y="604.70" width="6.90" height="147.00" fill="#bb852b" stroke="#b77c1d" stroke-width="0.5"/>
<rect x="683.29" y="569.80" width="6.90" height="34.90" fill="#999999" stroke="#949494" stroke-width="0.5"/>
<rect x="683.29" y="544.00" width="6.90" height="25.80" fill="#c55e58" stroke="#c4544f" stroke-width="0.5"/>
<rect x="683.29" y="517.90" width="6.90" height="26.10" fill="#e97aab" stroke="#e8639c" stroke-width="0.5"/>
<rect x="693.66" y="939.00" width="6.90" height="8.40" fill="#e41a1c" stroke="#e3100f" stroke-width="0.5"/>
<rect x="693.66" y="785.90" width="6.90" height="153.10" fill="#3a85a8" stroke="#2e7fab" stroke-width="0.5"/>
<rect x="693.66" y="782.80" width="6.90" height="3.10" fill="#629363" stroke="#58905e" stroke-width="0.5"/>
<rect x="693.66" y="777.90" width="6.90" height="4.90" fill="#fecb23" stroke="#ffc50f" stroke-width="0.5"/>
<rect x="693.66" y="642.80" width="6.90" height="135.10" fill="#bb852b" stroke="#b77c1d" stroke-width="0.5"/>
<rect x="693.66" y="603.70" width="6.90" height="39.10" fill="#999999" stroke="#949494" stroke-width="0.5"/>
<rect x="693.66" y="575.80" width="6.90" height="27.90" fill="#c55e58" stroke="#c4544f" stroke-width="0.5"/>
<rect x="693.66" y="561.90" width="6.90" height="13.90" fill="#e97aab" stroke="#e8639c" stroke-width="0.5"/>
<rect x="703.69" y="939.90" width="6.90" height="7.50" fill="#e41a1c" stroke="#e3100f" stroke-width="0.5"/>
<rect x="703.69" y="792.80" width="6.90" height="147.10" fill="#3a85a8" stroke="#2e7fab" stroke-width="0.5"/>
<rect x="703.69" y="787.90" width="6.90" height="4.90" fill="#629363" stroke="#58905e" stroke-width="0.5"/>
<rect x="703.69" y="782.80" width="6.90" height="5.10" fill="#fecb23" stroke="#ffc50f" stroke-width="0.5"/>
<rect x="703.69" y="621.60" width="6.90" height="161.20" fill="#bb852b" stroke="#b77c1d" stroke-width="0.5"/>
<rect x="703.69" y="584.70" width="6.90" height="36.90" fill="#999999" stroke="#949494" stroke-width="0.5"/>
<rect x="703.69" y="556.00" width="6.90" height="28.70" fill="#c55e58" stroke="#c4544f" stroke-width="0.5"/>
<rect x="703.69" y="539.00" width="6.90" height="17.00" fill="#e97aab" stroke="#e8639c" stroke-width="0.5"/>
<rect x="714.06" y="939.00" width="6.90" height="8.40" fill="#e41a1c" stroke="#e3100f" stroke-width="0.5"/>
<rect x="714.06" y="800.90" width="6.90" height="138.10" fill="#3a85a8" stroke="#2e7fab" stroke-width="0.5"/>
<rect x="714.06" y="797.00" width="6.90" height="3.90" fill="#629363" stroke="#58905e" stroke-width="0.5"/>
<rect x="714.06" y="790.80" width="6.90" height="6.20" fill="#fecb23" stroke="#ffc50f" stroke-width="0.5"/>
<rect x="714.06" y="632.60" width="6.90" height="158.20" fill="#bb852b" stroke="#b77c1d" stroke-width="0.5"/>
<rect x="714.06" y="600.80" width="6.90" height="31.80" fill="#999999" stroke="#949494" stroke-width="0.5"/>
<rect x="714.06" y="568.80" width="6.90" height="32.00" fill="#c55e58" stroke="#c4544f" stroke-width="0.5"/>
<rect x="714.06" y="551.00" width="6.90" height="17.80" fill="#e97aab" stroke="#e8639c" stroke-width="0.5"/>
<rect x="724.10" y="941.00" width="6.90" height="6.40" fill="#e41a1c" stroke="#e3100f" stroke-width="0.5"/>
<rect x="724.10" y="812.80" width="6.90" height="128.20" fill="#3a85a8" stroke="#2e7fab" stroke-width="0.5"/>
<rect x="724.10" y="807.00" width="6.90" height="5.80" fill="#629363" stroke="#58905e" stroke-width="0.5"/>
<rect x="724.10" y="801.80" width="6.90" height="5.20" fill="#fecb23" stroke="#ffc50f" stroke-width="0.5"/>
<rect x="724.10" y="627.50" width="6.90" height="174.30" fill="#bb852b" stroke="#b77c1d" stroke-width="0.5"/>
<rect x="724.10" y="595.90" width="6.90" height="31.60" fill="#999999" stroke="#949494" stroke-width="0.5"/>
<rect x="724.10" y="568.80" width="6.90" height="27.10" fill="#c55e58" stroke="#c4544f" stroke-width="0.5"/>
<rect x="724.10" y="551.00" width="6.90" height="17.80" fill="#e97aab" stroke="#e8639c" stroke-width="0.5"/>
<rect x="734.47" y="937.00" width="6.90" height="10.40" fill="#e41a1c" stroke="#e3100f" stroke-width="0.5"/>
<rect x="734.47" y="794.70" width="6.90" height="142.30" fill="#3a85a8" stroke="#2e7fab" stroke-width="0.5"/>
<rect x="734.47" y="789.80" width="6.90" height="4.90" fill="#629363" stroke="#58905e" stroke-width="0.5"/>
<rect x="734.47" y="785.00" width="6.90" height="4.80" fill="#fecb23" stroke="#ffc50f" stroke-width="0.5"/>
<rect x="734.47" y="600.80" width="6.90" height="184.20" fill="#bb852b" stroke="#b77c1d" stroke-width="0.5"/>
<rect x="734.47" y="559.90" width="6.90" height="40.90" fill="#999999" stroke="#949494" stroke-width="0.5"/>
<rect x="734.47" y="528.90" width="6.90" height="31.00" fill="#c55e58" stroke="#c4544f" stroke-width="0.5"/>
<rect x="734.47" y="509.90" width="6.90" height="19.00" fill="#e97aab" stroke="#e8639c" stroke-width="0.5"/>
<rect x="744.84" y="937.00" width="6.90" height="10.40" fill="#e41a1c" stroke="#e3100f" stroke-width="0.5"/>
<rect x="744.84" y="795.70" width="6.90" height="141.30" fill="#3a85a8" stroke="#2e7fab" stroke-width="0.5"/>
<rect x="744.84" y="790.80" width="6.90" height="4.90" fill="#629363" stroke="#58905e" stroke-width="0.5"/>
<rect x="744.84" y="787.90" width="6.90" height="2.90" fill="#fecb23" stroke="#ffc50f" stroke-width="0.5"/>
<rect x="744.84" y="625.70" width="6.90" height="162.20" fill="#bb852b" stroke="#b77c1d" stroke-width="0.5"/>
<rect x="744.84" y="583.70" width="6.90" height="42.00" fill="#999999" stroke="#949494" stroke-width="0.5"/>
<rect x="744.84" y="553.90" width="6.90" height="29.80" fill="#c55e58" stroke="#c4544f" stroke-width="0.5"/>
<rect x="744.84" y="538.00" width="6.90" height="15.90" fill="#e97aab" stroke="#e8639c" stroke-width="0.5"/>
<rect x="754.88" y="934.00" width="6.90" height="13.40" fill="#e41a1c" stroke="#e3100f" stroke-width="0.5"/>
<rect x="754.88" y="803.80" width="6.90" height="130.20" fill="#3a85a8" stroke="#2e7fab" stroke-width="0.5"/>
<rect x="754.88" y="798.90" width="6.90" height="4.90" fill="#629363" stroke="#58905e" stroke-width="0.5"/>
<rect x="754.88" y="794.70" width="6.90" height="4.20" fill="#fecb23" stroke="#ffc50f" stroke-width="0.5"/>
<rect x="754.88" y="581.90" width="6.90" height="212.80" fill="#bb852b" stroke="#b77c1d" stroke-width="0.5"/>
<rect x="754.88" y="545.00" width="6.90" height="36.90" fill="#999999" stroke="#949494" stroke-width="0.5"/>
<rect x="754.88" y="518.90" width="6.90" height="26.10" fill="#c55e58" stroke="#c4544f" stroke-width="0.5"/>
<rect x="754.88" y="503.00" width="6.90" height="15.90" fill="#e97aab" stroke="#e8639c" stroke-width="0.5"/>
<rect x="765.25" y="937.00" width="6.90" height="10.40" fill="#e41a1c" stroke="#e3100f" stroke-width="0.5"/>
<rect x="765.25" y="765.90" width="6.90" height="171.10" fill="#3a85a8" stroke="#2e7fab" stroke-width="0.5"/>
<rect x="765.25" y="761.70" width="6.90" height="4.20" fill="#629363" stroke="#58905e" stroke-width="0.5"/>
<rect x="765.25" y="756.80" width="6.90" height="4.90" fill="#fecb23" stroke="#ffc50f" stroke-width="0.5"/>
<rect x="765.25" y="557.80" width="6.90" height="199.00" fill="#bb852b" stroke="#b77c1d" stroke-width="0.5"/>
<rect x="765.25" y="512.80" width="6.90" height="45.00" fill="#999999" stroke="#949494" stroke-width="0.5"/>
<rect x="765.25" y="487.90" width="6.90" height="24.90" fill="#c55e58" stroke="#c4544f" stroke-width="0.5"/>
<rect x="765.25" y="470.00" width="6.90" height="17.90" fill="#e97aab" stroke="#e8639c" stroke-width="0.5"/>
<rect x="775.28" y="938.00" width="6.90" height="9.40" fill="#e41a1c" stroke="#e3100f" stroke-width="0.5"/>
<rect x="775.28" y="763.90" width="6.90" height="174.10" fill="#3a85a8" stroke="#2e7fab" stroke-width="0.5"/>
<rect x="775.28" y="760.00" width="6.90" height="3.90" fill="#629363" stroke="#58905e" stroke-width="0.5"/>
<rect x="775.28" y="755.60" width="6.90" height="4.40" fill="#fecb23" stroke="#ffc50f" stroke-width="0.5"/>
<rect x="775.28" y="547.80" width="6.90" height="207.80" fill="#bb852b" stroke="#b77c1d" stroke-width="0.5"/>
<rect x="775.28" y="509.90" width="6.90" height="37.90" fill="#999999" stroke="#949494" stroke-width="0.5"/>
<rect x="775.28" y="484.80" width="6.90" height="25.10" fill="#c55e58" stroke="#c4544f" stroke-width="0.5"/>
<rect x="775.28" y="471.00" width="6.90" height="13.80" fill="#e97aab" stroke="#e8639c" stroke-width="0.5"/>
<rect x="785.65" y="934.90" width="6.90" height="12.50" fill="#e41a1c" stroke="#e3100f" stroke-width="0.5"/>
<rect x="785.65" y="774.00" width="6.90" height="160.90" fill="#3a85a8" stroke="#2e7fab" stroke-width="0.5"/>
<rect x="785.65" y="768.00" width="6.90" height="6.00" fill="#629363" stroke="#58905e" stroke-width="0.5"/>
<rect x="785.65" y="762.90" width="6.90" height="5.10" fill="#fecb23" stroke="#ffc50f" stroke-width="0.5"/>
<rect x="785.65" y="557.90" width="6.90" height="205.00" fill="#bb852b" stroke="#b77c1d" stroke-width="0.5"/>
<rect x="785.65" y="510.00" width="6.90" height="47.90" fill="#999999" stroke="#949494" stroke-width="0.5"/>
<rect x="785.65" y="483.90" width="6.90" height="26.10" fill="#c55e58" stroke="#c4544f" stroke-width="0.5"/>
<rect x="785.65" y="468.00" width="6.90" height="15.90" fill="#e97aab" stroke="#e8639c" stroke-width="0.5"/>
<rect x="796.02" y="934.90" width="6.90" height="12.50" fill="#e41a1c" stroke="#e3100f" stroke-width="0.5"/>
<rect x="796.02" y="752.00" width="6.90" height="182.90" fill="#3a85a8" stroke="#2e7fab" stroke-width="0.5"/>
<rect x="796.02" y="746.90" width="6.90" height="5.10" fill="#629363" stroke="#58905e" stroke-width="0.5"/>
<rect x="796.02" y="741.90" width="6.90" height="5.00" fill="#fecb23" stroke="#ffc50f" stroke-width="0.5"/>
<rect x="796.02" y="550.00" width="6.90" height="191.90" fill="#bb852b" stroke="#b77c1d" stroke-width="0.5"/>
<rect x="796.02" y="508.00" width="6.90" height="42.00" fill="#999999" stroke="#949494" stroke-width="0.5"/>
<rect x="796.02" y="479.80" width="6.90" height="28.20" fill="#c55e58" stroke="#c4544f" stroke-width="0.5"/>
<rect x="796.02" y="456.00" width="6.90" height="23.80" fill="#e97aab" stroke="#e8639c" stroke-width="0.5"/>
<rect x="805.39" y="937.80" width="6.90" height="9.60" fill="#e41a1c" stroke="#e3100f" stroke-width="0.5"/>
<rect x="805.39" y="776.00" width="6.90" height="161.80" fill="#3a85a8" stroke="#2e7fab" stroke-width="0.5"/>
<rect x="805.39" y="771.00" width="6.90" height="5.00" fill="#629363" stroke="#58905e" stroke-width="0.5"/>
<rect x="805.39" y="767.80" width="6.90" height="3.20" fill="#fecb23" stroke="#ffc50f" stroke-width="0.5"/>
<rect x="805.39" y="585.00" width="6.90" height="182.80" fill="#bb852b" stroke="#b77c1d" stroke-width="0.5"/>
<rect x="805.39" y="546.10" width="6.90" height="38.90" fill="#999999" stroke="#949494" stroke-width="0.5"/>
<rect x="805.39" y="520.00" width="6.90" height="26.10" fill="#c55e58" stroke="#c4544f" stroke-width="0.5"/>
<rect x="805.39" y="501.00" width="6.90" height="19.00" fill="#e97aab" stroke="#e8639c" stroke-width="0.5"/>
<rect x="815.76" y="939.00" width="6.90" height="8.40" fill="#e41a1c" stroke="#e3100f" stroke-width="0.5"/>
<rect x="815.76" y="796.00" width="6.90" height="143.00" fill="#3a85a8" stroke="#2e7fab" stroke-width="0.5"/>
<rect x="815.76" y="789.00" width="6.90" height="7.00" fill="#629363" stroke="#58905e" stroke-width="0.5"/>
<rect x="815.76" y="783.00" width="6.90" height="6.00" fill="#fecb23" stroke="#ffc50f" stroke-width="0.5"/>
<rect x="815.76" y="573.00" width="6.90" height="210.00" fill="#bb852b" stroke="#b77c1d" stroke-width="0.5"/>
<rect x="815.76" y="533.00" width="6.90" height="40.00" fill="#999999" stroke="#949494" stroke-width="0.5"/>
<rect x="815.76" y="504.90" width="6.90" height="28.10" fill="#c55e58" stroke="#c4544f" stroke-width="0.5"/>
<rect x="815.76" y="483.90" width="6.90" height="21.00" fill="#e97aab" stroke="#e8639c" stroke-width="0.5"/>
<rect x="825.80" y="941.00" width="6.90" height="6.40" fill="#e41a1c" stroke="#e3100f" stroke-width="0.5"/>
<rect x="825.80" y="797.00" width="6.90" height="144.00" fill="#3a85a8" stroke="#2e7fab" stroke-width="0.5"/>
<rect x="825.80" y="793.00" width="6.90" height="4.00" fill="#629363" stroke="#58905e" stroke-width="0.5"/>
<rect x="825.80" y="787.90" width="6.90" height="5.10" fill="#fecb23" stroke="#ffc50f" stroke-width="0.5"/>
<rect x="825.80" y="574.00" width="6.90" height="213.90" fill="#bb852b" stroke="#b77c1d" stroke-width="0.5"/>
<rect x="825.80" y="534.00" width="6.90" height="40.00" fill="#999999" stroke="#949494" stroke-width="0.5"/>
<rect x="825.80" y="502.90" width="6.90" height="31.10" fill="#c55e58" stroke="#c4544f" stroke-width="0.5"/>
<rect x="825.80" y="486.00" width="6.90" height="16.90" fill="#e97aab" stroke="#e8639c" stroke-width="0.5"/>
<rect x="836.17" y="937.80" width="6.90" height="9.60" fill="#e41a1c" stroke="#e3100f" stroke-width="0.5"/>
<rect x="836.17" y="800.90" width="6.90" height="136.90" fill="#3a85a8" stroke="#2e7fab" stroke-width="0.5"/>
<rect x="836.17" y="797.00" width="6.90" height="3.90" fill="#629363" stroke="#58905e" stroke-width="0.5"/>
<rect x="836.17" y="792.00" width="6.90" height="5.00" fill="#fecb23" stroke="#ffc50f" stroke-width="0.5"/>
<rect x="836.17" y="587.90" width="6.90" height="204.10" fill="#bb852b" stroke="#b77c1d" stroke-width="0.5"/>
<rect x="836.17" y="547.90" width="6.90" height="40.00" fill="#999999" stroke="#949494" stroke-width="0.5"/>
<rect x="836.17" y="517.00" width="6.90" height="30.90" fill="#c55e58" stroke="#c4544f" stroke-width="0.5"/>
<rect x="836.17" y="498.00" width="6.90" height="19.00" fill="#e97aab" stroke="#e8639c" stroke-width="0.5"/>
<rect x="846.20" y="942.90" width="6.90" height="4.50" fill="#e41a1c" stroke="#e3100f" stroke-width="0.5"/>
<rect x="846.20" y="800.10" width="6.90" height="142.80" fill="#3a85a8" stroke="#2e7fab" stroke-width="0.5"/>
<rect x="846.20" y="796.00" width="6.90" height="4.10" fill="#629363" stroke="#58905e" stroke-width="0.5"/>
<rect x="846.20" y="787.90" width="6.90" height="8.10" fill="#fecb23" stroke="#ffc50f" stroke-width="0.5"/>
<rect x="846.20" y="586.90" width="6.90" height="201.00" fill="#bb852b" stroke="#b77c1d" stroke-width="0.5"/>
<rect x="846.20" y="555.90" width="6.90" height="31.00" fill="#999999" stroke="#949494" stroke-width="0.5"/>
<rect x="846.20" y="529.00" width="6.90" height="26.90" fill="#c55e58" stroke="#c4544f" stroke-width="0.5"/>
<rect x="846.20" y="511.00" width="6.90" height="18.00" fill="#e97aab" stroke="#e8639c" stroke-width="0.5"/>
<rect x="856.57" y="942.90" width="6.90" height="4.50" fill="#e41a1c" stroke="#e3100f" stroke-width="0.5"/>
<rect x="856.57" y="805.20" width="6.90" height="137.70" fill="#3a85a8" stroke="#2e7fab" stroke-width="0.5"/>
<rect x="856.57" y="802.00" width="6.90" height="3.20" fill="#629363" stroke="#58905e" stroke-width="0.5"/>
<rect x="856.57" y="797.00" width="6.90" height="5.00" fill="#fecb23" stroke="#ffc50f" stroke-width="0.5"/>
<rect x="856.57" y="617.80" width="6.90" height="179.20" fill="#bb852b" stroke="#b77c1d" stroke-width="0.5"/>
<rect x="856.57" y="581.00" width="6.90" height="36.80" fill="#999999" stroke="#949494" stroke-width="0.5"/>
<rect x="856.57" y="554.00" width="6.90" height="27.00" fill="#c55e58" stroke="#c4544f" stroke-width="0.5"/>
<rect x="856.57" y="535.10" width="6.90" height="18.90" fill="#e97aab" stroke="#e8639c" stroke-width="0.5"/>
<rect x="866.94" y="942.00" width="6.90" height="5.40" fill="#e41a1c" stroke="#e3100f" stroke-width="0.5"/>
<rect x="866.94" y="806.00" width="6.90" height="136.00" fill="#3a85a8" stroke="#2e7fab" stroke-width="0.5"/>
<rect x="866.94" y="802.00" width="6.90" height="4.00" fill="#629363" stroke="#58905e" stroke-width="0.5"/>
<rect x="866.94" y="797.00" width="6.90" height="5.00" fill="#fecb23" stroke="#ffc50f" stroke-width="0.5"/>
<rect x="866.94" y="599.90" width="6.90" height="197.10" fill="#bb852b" stroke="#b77c1d" stroke-width="0.5"/>
<rect x="866.94" y="560.00" width="6.90" height="39.90" fill="#999999" stroke="#949494" stroke-width="0.5"/>
<rect x="866.94" y="532.00" width="6.90" height="28.00" fill="#c55e58" stroke="#c4544f" stroke-width="0.5"/>
<rect x="866.94" y="517.00" width="6.90" height="15.00" fill="#e97aab" stroke="#e8639c" stroke-width="0.5"/>
<rect x="876.98" y="942.00" width="6.90" height="5.40" fill="#e41a1c" stroke="#e3100f" stroke-width="0.5"/>
<rect x="876.98" y="796.00" width="6.90" height="146.00" fill="#3a85a8" stroke="#2e7fab" stroke-width="0.5"/>
<rect x="876.98" y="791.00" width="6.90" height="5.00" fill="#629363" stroke="#58905e" stroke-width="0.5"/>
<rect x="876.98" y="788.70" width="6.90" height="2.30" fill="#fecb23" stroke="#ffc50f" stroke-width="0.5"/>
<rect x="876.98" y="602.00" width="6.90" height="186.70" fill="#bb852b" stroke="#b77c1d" stroke-width="0.5"/>
<rect x="876.98" y="563.00" width="6.90" height="39.00" fill="#999999" stroke="#949494" stroke-width="0.5"/>
<rect x="876.98" y="539.00" width="6.90" height="24.00" fill="#c55e58" stroke="#c4544f" stroke-width="0.5"/>
<rect x="876.98" y="520.00" width="6.90" height="19.00" fill="#e97aab" stroke="#e8639c" stroke-width="0.5"/>
<rect x="887.35" y="942.00" width="6.90" height="5.40" fill="#e41a1c" stroke="#e3100f" stroke-width="0.5"/>
<rect x="887.35" y="751.00" width="6.90" height="191.00" fill="#3a85a8" stroke="#2e7fab" stroke-width="0.5"/>
<rect x="887.35" y="749.00" width="6.90" height="2.00" fill="#629363" stroke="#58905e" stroke-width="0.5"/>
<rect x="887.35" y="746.80" width="6.90" height="2.20" fill="#fecb23" stroke="#ffc50f" stroke-width="0.5"/>
<rect x="887.35" y="524.90" width="6.90" height="221.90" fill="#bb852b" stroke="#b77c1d" stroke-width="0.5"/>
<rect x="887.35" y="485.00" width="6.90" height="39.90" fill="#999999" stroke="#949494" stroke-width="0.5"/>
<rect x="887.35" y="459.00" width="6.90" height="26.00" fill="#c55e58" stroke="#c4544f" stroke-width="0.5"/>
<rect x="887.35" y="443.00" width="6.90" height="16.00" fill="#e97aab" stroke="#e8639c" stroke-width="0.5"/>
<rect x="897.39" y="937.80" width="6.90" height="9.60" fill="#e41a1c" stroke="#e3100f" stroke-width="0.5"/>
<rect x="897.39" y="762.90" width="6.90" height="174.90" fill="#3a85a8" stroke="#2e7fab" stroke-width="0.5"/>
<rect x="897.39" y="758.00" width="6.90" height="4.90" fill="#629363" stroke="#58905e" stroke-width="0.5"/>
<rect x="897.39" y="755.00" width="6.90" height="3.00" fill="#fecb23" stroke="#ffc50f" stroke-width="0.5"/>
<rect x="897.39" y="620.70" width="6.90" height="134.30" fill="#bb852b" stroke="#b77c1d" stroke-width="0.5"/>
<rect x="897.39" y="571.00" width="6.90" height="49.70" fill="#999999" stroke="#949494" stroke-width="0.5"/>
<rect x="897.39" y="541.00" width="6.90" height="30.00" fill="#c55e58" stroke="#c4544f" stroke-width="0.5"/>
<rect x="897.39" y="519.00" width="6.90" height="22.00" fill="#e97aab" stroke="#e8639c" stroke-width="0.5"/>
<rect x="907.76" y="941.00" width="6.90" height="6.40" fill="#e41a1c" stroke="#e3100f" stroke-width="0.5"/>
<rect x="907.76" y="768.00" width="6.90" height="173.00" fill="#3a85a8" stroke="#2e7fab" stroke-width="0.5"/>
<rect x="907.76" y="762.00" width="6.90" height="6.00" fill="#629363" stroke="#58905e" stroke-width="0.5"/>
<rect x="907.76" y="758.80" width="6.90" height="3.20" fill="#fecb23" stroke="#ffc50f" stroke-width="0.5"/>
<rect x="907.76" y="585.00" width="6.90" height="173.80" fill="#bb852b" stroke="#b77c1d" stroke-width="0.5"/>
<rect x="907.76" y="544.00" width="6.90" height="41.00" fill="#999999" stroke="#949494" stroke-width="0.5"/>
<rect x="907.76" y="523.90" width="6.90" height="20.10" fill="#c55e58" stroke="#c4544f" stroke-width="0.5"/>
<rect x="907.76" y="501.90" width="6.90" height="22.00" fill="#e97aab" stroke="#e8639c" stroke-width="0.5"/>
<rect x="918.13" y="941.00" width="6.90" height="6.40" fill="#e41a1c" stroke="#e3100f" stroke-width="0.5"/>
<rect x="918.13" y="774.00" width="6.90" height="167.00" fill="#3a85a8" stroke="#2e7fab" stroke-width="0.5"/>
<rect x="918.13" y="769.00" width="6.90" height="5.00" fill="#629363" stroke="#58905e" stroke-width="0.5"/>
<rect x="918.13" y="765.90" width="6.90" height="3.10" fill="#fecb23" stroke="#ffc50f" stroke-width="0.5"/>
<rect x="918.13" y="600.90" width="6.90" height="165.00" fill="#bb852b" stroke="#b77c1d" stroke-width="0.5"/>
<rect x="918.13" y="561.00" width="6.90" height="39.90" fill="#999999" stroke="#949494" stroke-width="0.5"/>
<rect x="918.13" y="536.90" width="6.90" height="24.10" fill="#c55e58" stroke="#c4544f" stroke-width="0.5"/>
<rect x="918.13" y="515.90" width="6.90" height="21.00" fill="#e97aab" stroke="#e8639c" stroke-width="0.5"/>
<rect x="927.49" y="941.00" width="6.90" height="6.40" fill="#e41a1c" stroke="#e3100f" stroke-width="0.5"/>
<rect x="927.49" y="771.00" width="6.90" height="170.00" fill="#3a85a8" stroke="#2e7fab" stroke-width="0.5"/>
<rect x="927.49" y="766.00" width="6.90" height="5.00" fill="#629363" stroke="#58905e" stroke-width="0.5"/>
<rect x="927.49" y="762.90" width="6.90" height="3.10" fill="#fecb23" stroke="#ffc50f" stroke-width="0.5"/>
<rect x="927.49" y="583.00" width="6.90" height="179.90" fill="#bb852b" stroke="#b77c1d" stroke-width="0.5"/>
<rect x="927.49" y="531.00" width="6.90" height="52.00" fill="#999999" stroke="#949494" stroke-width="0.5"/>
<rect x="927.49" y="502.90" width="6.90" height="28.10" fill="#c55e58" stroke="#c4544f" stroke-width="0.5"/>
<rect x="927.49" y="487.00" width="6.90" height="15.90" fill="#e97aab" stroke="#e8639c" stroke-width="0.5"/>
<rect x="937.86" y="942.90" width="6.90" height="4.50" fill="#e41a1c" stroke="#e3100f" stroke-width="0.5"/>
<rect x="937.86" y="792.00" width="6.90" height="150.90" fill="#3a85a8" stroke="#2e7fab" stroke-width="0.5"/>
<rect x="937.86" y="787.10" width="6.90" height="4.90" fill="#629363" stroke="#58905e" stroke-width="0.5"/>
<rect x="937.86" y="784.00" width="6.90" height="3.10" fill="#fecb23" stroke="#ffc50f" stroke-width="0.5"/>
<rect x="937.86" y="584.90" width="6.90" height="199.10" fill="#bb852b" stroke="#b77c1d" stroke-width="0.5"/>
<rect x="937.86" y="541.90" width="6.90" height="43.00" fill="#999999" stroke="#949494" stroke-width="0.5"/>
<rect x="937.86" y="514.00" width="6.90" height="27.90" fill="#c55e58" stroke="#c4544f" stroke-width="0.5"/>
<rect x="937.86" y="497.10" width="6.90" height="16.90" fill="#e97aab" stroke="#e8639c" stroke-width="0.5"/>
<rect x="947.90" y="942.00" width="6.90" height="5.40" fill="#e41a1c" stroke="#e3100f" stroke-width="0.5"/>
<rect x="947.90" y="782.00" width="6.90" height="160.00" fill="#3a85a8" stroke="#2e7fab" stroke-width="0.5"/>
<rect x="947.90" y="778.10" width="6.90" height="3.90" fill="#629363" stroke="#58905e" stroke-width="0.5"/>
<rect x="947.90" y="775.00" width="6.90" height="3.10" fill="#fecb23" stroke="#ffc50f" stroke-width="0.5"/>
<rect x="947.90" y="579.00" width="6.90" height="196.00" fill="#bb852b" stroke="#b77c1d" stroke-width="0.5"/>
<rect x="947.90" y="537.00" width="6.90" height="42.00" fill="#999999" stroke="#949494" stroke-width="0.5"/>
<rect x="947.90" y="506.90" width="6.90" height="30.10" fill="#c55e58" stroke="#c4544f" stroke-width="0.5"/>
<rect x="947.90" y="487.10" width="6.90" height="19.80" fill="#e97aab" stroke="#e8639c" stroke-width="0.5"/>
<rect x="958.27" y="942.00" width="6.90" height="5.40" fill="#e41a1c" stroke="#e3100f" stroke-width="0.5"/>
<rect x="958.27" y="789.00" width="6.90" height="153.00" fill="#3a85a8" stroke="#2e7fab" stroke-width="0.5"/>
<rect x="958.27" y="784.10" width="6.90" height="4.90" fill="#629363" stroke="#58905e" stroke-width="0.5"/>
<rect x="958.27" y="781.00" width="6.90" height="3.10" fill="#fecb23" stroke="#ffc50f" stroke-width="0.5"/>
<rect x="958.27" y="559.00" width="6.90" height="222.00" fill="#bb852b" stroke="#b77c1d" stroke-width="0.5"/>
<rect x="958.27" y="517.00" width="6.90" height="42.00" fill="#999999" stroke="#949494" stroke-width="0.5"/>
<rect x="958.27" y="487.90" width="6.90" height="29.10" fill="#c55e58" stroke="#c4544f" stroke-width="0.5"/>
<rect x="958.27" y="473.00" width="6.90" height="14.90" fill="#e97aab" stroke="#e8639c" stroke-width="0.5"/>
<rect x="968.31" y="941.00" width="6.90" height="6.40" fill="#e41a1c" stroke="#e3100f" stroke-width="0.5"/>
<rect x="968.31" y="794.90" width="6.90" height="146.10" fill="#3a85a8" stroke="#2e7fab" stroke-width="0.5"/>
<rect x="968.31" y="791.00" width="6.90" height="3.90" fill="#629363" stroke="#58905e" stroke-width="0.5"/>
<rect x="968.31" y="785.90" width="6.90" height="5.10" fill="#fecb23" stroke="#ffc50f" stroke-width="0.5"/>
<rect x="968.31" y="610.80" width="6.90" height="175.10" fill="#bb852b" stroke="#b77c1d" stroke-width="0.5"/>
<rect x="968.31" y="565.00" width="6.90" height="45.80" fill="#999999" stroke="#949494" stroke-width="0.5"/>
<rect x="968.31" y="540.90" width="6.90" height="24.10" fill="#c55e58" stroke="#c4544f" stroke-width="0.5"/>
<rect x="968.31" y="525.00" width="6.90" height="15.90" fill="#e97aab" stroke="#e8639c" stroke-width="0.5"/>
<rect x="978.68" y="944.10" width="6.90" height="3.30" fill="#e41a1c" stroke="#e3100f" stroke-width="0.5"/>
<rect x="978.68" y="793.90" width="6.90" height="150.20" fill="#3a85a8" stroke="#2e7fab" stroke-width="0.5"/>
<rect x="978.68" y="789.00" width="6.90" height="4.90" fill="#629363" stroke="#58905e" stroke-width="0.5"/>
<rect x="978.68" y="785.90" width="6.90" height="3.10" fill="#fecb23" stroke="#ffc50f" stroke-width="0.5"/>
<rect x="978.68" y="580.80" width="6.90" height="205.10" fill="#bb852b" stroke="#b77c1d" stroke-width="0.5"/>
<rect x="978.68" y="527.90" width="6.90" height="52.90" fill="#999999" stroke="#949494" stroke-width="0.5"/>
<rect x="978.68" y="507.90" width="6.90" height="20.00" fill="#c55e58" stroke="#c4544f" stroke-width="0.5"/>
<rect x="978.68" y="492.00" width="6.90" height="15.90" fill="#e97aab" stroke="#e8639c" stroke-width="0.5"/>
<rect x="989.05" y="941.00" width="6.90" height="6.40" fill="#e41a1c" stroke="#e3100f" stroke-width="0.5"/>
<rect x="989.05" y="785.00" width="6.90" height="156.00" fill="#3a85a8" stroke="#2e7fab" stroke-width="0.5"/>
<rect x="989.05" y="781.00" width="6.90" height="4.00" fill="#629363" stroke="#58905e" stroke-width="0.5"/>
<rect x="989.05" y="778.90" width="6.90" height="2.10" fill="#fecb23" stroke="#ffc50f" stroke-width="0.5"/>
<rect x="989.05" y="603.90" width="6.90" height="175.00" fill="#bb852b" stroke="#b77c1d" stroke-width="0.5"/>
<rect x="989.05" y="556.00" width="6.90" height="47.90" fill="#999999" stroke="#949494" stroke-width="0.5"/>
<rect x="989.05" y="536.00" width="6.90" height="20.00" fill="#c55e58" stroke="#c4544f" stroke-width="0.5"/>
<rect x="989.05" y="517.90" width="6.90" height="18.10" fill="#e97aab" stroke="#e8639c" stroke-width="0.5"/>
<rect x="999.08" y="942.00" width="6.90" height="5.40" fill="#e41a1c" stroke="#e3100f" stroke-width="0.5"/>
<rect x="999.08" y="789.00" width="6.90" height="153.00" fill="#3a85a8" stroke="#2e7fab" stroke-width="0.5"/>
<rect x="999.08" y="784.00" width="6.90" height="5.00" fill="#629363" stroke="#58905e" stroke-width="0.5"/>
<rect x="999.08" y="779.90" width="6.90" height="4.10" fill="#fecb23" stroke="#ffc50f" stroke-width="0.5"/>
<rect x="999.08" y="617.70" width="6.90" height="162.20" fill="#bb852b" stroke="#b77c1d" stroke-width="0.5"/>
<rect x="999.08" y="572.90" width="6.90" height="44.80" fill="#999999" stroke="#949494" stroke-width="0.5"/>
<rect x="999.08" y="547.00" width="6.90" height="25.90" fill="#c55e58" stroke="#c4544f" stroke-width="0.5"/>
<rect x="999.08" y="526.00" width="6.90" height="21.00" fill="#e97aab" stroke="#e8639c" stroke-width="0.5"/>
<rect x="1009.45" y="942.00" width="6.90" height="5.40" fill="#e41a1c" stroke="#e3100f" stroke-width="0.5"/>
<rect x="1009.45" y="757.00" width="6.90" height="185.00" fill="#3a85a8" stroke="#2e7fab" stroke-width="0.5"/>
<rect x="1009.45" y="752.00" width="6.90" height="5.00" fill="#629363" stroke="#58905e" stroke-width="0.5"/>
<rect x="1009.45" y="750.00" width="6.90" height="2.00" fill="#fecb23" stroke="#ffc50f" stroke-width="0.5"/>
<rect x="1009.45" y="546.00" width="6.90" height="204.00" fill="#bb852b" stroke="#b77c1d" stroke-width="0.5"/>
<rect x="1009.45" y="503.00" width="6.90" height="43.00" fill="#999999" stroke="#949494" stroke-width="0.5"/>
<rect x="1009.45" y="481.00" width="6.90" height="22.00" fill="#c55e58" stroke="#c4544f" stroke-width="0.5"/>
<rect x="1009.45" y="465.90" width="6.90" height="15.10" fill="#e97aab" stroke="#e8639c" stroke-width="0.5"/>
<rect x="1019.49" y="942.00" width="6.90" height="5.40" fill="#e41a1c" stroke="#e3100f" stroke-width="0.5"/>
<rect x="1019.49" y="766.00" width="6.90" height="176.00" fill="#3a85a8" stroke="#2e7fab" stroke-width="0.5"/>
<rect x="1019.49" y="762.90" width="6.90" height="3.10" fill="#629363" stroke="#58905e" stroke-width="0.5"/>
<rect x="1019.49" y="760.00" width="6.90" height="2.90" fill="#fecb23" stroke="#ffc50f" stroke-width="0.5"/>
<rect x="1019.49" y="625.70" width="6.90" height="134.30" fill="#bb852b" stroke="#b77c1d" stroke-width="0.5"/>
<rect x="1019.49" y="569.80" width="6.90" height="55.90" fill="#999999" stroke="#949494" stroke-width="0.5"/>
<rect x="1019.49" y="546.00" width="6.90" height="23.80" fill="#c55e58" stroke="#c4544f" stroke-width="0.5"/>
<rect x="1019.49" y="529.90" width="6.90" height="16.10" fill="#e97aab" stroke="#e8639c" stroke-width="0.5"/>
<rect x="1029.86" y="940.00" width="6.90" height="7.40" fill="#e41a1c" stroke="#e3100f" stroke-width="0.5"/>
<rect x="1029.86" y="761.90" width="6.90" height="178.10" fill="#3a85a8" stroke="#2e7fab" stroke-width="0.5"/>
<rect x="1029.86" y="757.00" width="6.90" height="4.90" fill="#629363" stroke="#58905e" stroke-width="0.5"/>
<rect x="1029.86" y="752.00" width="6.90" height="5.00" fill="#fecb23" stroke="#ffc50f" stroke-width="0.5"/>
<rect x="1029.86" y="606.90" width="6.90" height="145.10" fill="#bb852b" stroke="#b77c1d" stroke-width="0.5"/>
<rect x="1029.86" y="556.00" width="6.90" height="50.90" fill="#999999" stroke="#949494" stroke-width="0.5"/>
<rect x="1029.86" y="524.00" width="6.90" height="32.00" fill="#c55e58" stroke="#c4544f" stroke-width="0.5"/>
<rect x="1029.86" y="506.00" width="6.90" height="18.00" fill="#e97aab" stroke="#e8639c" stroke-width="0.5"/>
<rect x="1040.23" y="941.00" width="6.90" height="6.40" fill="#e41a1c" stroke="#e3100f" stroke-width="0.5"/>
<rect x="1040.23" y="744.00" width="6.90" height="197.00" fill="#3a85a8" stroke="#2e7fab" stroke-width="0.5"/>
<rect x="1040.23" y="741.00" width="6.90" height="3.00" fill="#629363" stroke="#58905e" stroke-width="0.5"/>
<rect x="1040.23" y="738.90" width="6.90" height="2.10" fill="#fecb23" stroke="#ffc50f" stroke-width="0.5"/>
<rect x="1040.23" y="584.90" width="6.90" height="154.00" fill="#bb852b" stroke="#b77c1d" stroke-width="0.5"/>
<rect x="1040.23" y="523.00" width="6.90" height="61.90" fill="#999999" stroke="#949494" stroke-width="0.5"/>
<rect x="1040.23" y="502.00" width="6.90" height="21.00" fill="#c55e58" stroke="#c4544f" stroke-width="0.5"/>
<rect x="1040.23" y="485.00" width="6.90" height="17.00" fill="#e97aab" stroke="#e8639c" stroke-width="0.5"/>
<rect x="1049.93" y="940.00" width="6.90" height="7.40" fill="#e41a1c" stroke="#e3100f" stroke-width="0.5"/>
<rect x="1049.93" y="761.90" width="6.90" height="178.10" fill="#3a85a8" stroke="#2e7fab" stroke-width="0.5"/>
<rect x="1049.93" y="757.00" width="6.90" height="4.90" fill="#629363" stroke="#58905e" stroke-width="0.5"/>
<rect x="1049.93" y="754.90" width="6.90" height="2.10" fill="#fecb23" stroke="#ffc50f" stroke-width="0.5"/>
<rect x="1049.93" y="579.80" width="6.90" height="175.10" fill="#bb852b" stroke="#b77c1d" stroke-width="0.5"/>
<rect x="1049.93" y="533.00" width="6.90" height="46.80" fill="#999999" stroke="#949494" stroke-width="0.5"/>
<rect x="1049.93" y="509.90" width="6.90" height="23.10" fill="#c55e58" stroke="#c4544f" stroke-width="0.5"/>
<rect x="1049.93" y="492.00" width="6.90" height="17.90" fill="#e97aab" stroke="#e8639c" stroke-width="0.5"/>
<rect x="1060.30" y="940.00" width="6.90" height="7.40" fill="#e41a1c" stroke="#e3100f" stroke-width="0.5"/>
<rect x="1060.30" y="774.00" width="6.90" height="166.00" fill="#3a85a8" stroke="#2e7fab" stroke-width="0.5"/>
<rect x="1060.30" y="769.00" width="6.90" height="5.00" fill="#629363" stroke="#58905e" stroke-width="0.5"/>
<rect x="1060.30" y="766.80" width="6.90" height="2.20" fill="#fecb23" stroke="#ffc50f" stroke-width="0.5"/>
<rect x="1060.30" y="592.90" width="6.90" height="173.90" fill="#bb852b" stroke="#b77c1d" stroke-width="0.5"/>
<rect x="1060.30" y="538.00" width="6.90" height="54.90" fill="#999999" stroke="#949494" stroke-width="0.5"/>
<rect x="1060.30" y="517.90" width="6.90" height="20.10" fill="#c55e58" stroke="#c4544f" stroke-width="0.5"/>
<rect x="1060.30" y="501.00" width="6.90" height="16.90" fill="#e97aab" stroke="#e8639c" stroke-width="0.5"/>
<rect x="1070.34" y="940.00" width="6.90" height="7.40" fill="#e41a1c" stroke="#e3100f" stroke-width="0.5"/>
<rect x="1070.34" y="792.90" width="6.90" height="147.10" fill="#3a85a8" stroke="#2e7fab" stroke-width="0.5"/>
<rect x="1070.34" y="787.10" width="6.90" height="5.80" fill="#629363" stroke="#58905e" stroke-width="0.5"/>
<rect x="1070.34" y="785.00" width="6.90" height="2.10" fill="#fecb23" stroke="#ffc50f" stroke-width="0.5"/>
<rect x="1070.34" y="612.80" width="6.90" height="172.20" fill="#bb852b" stroke="#b77c1d" stroke-width="0.5"/>
<rect x="1070.34" y="557.00" width="6.90" height="55.80" fill="#999999" stroke="#949494" stroke-width="0.5"/>
<rect x="1070.34" y="531.90" width="6.90" height="25.10" fill="#c55e58" stroke="#c4544f" stroke-width="0.5"/>
<rect x="1070.34" y="516.00" width="6.90" height="15.90" fill="#e97aab" stroke="#e8639c" stroke-width="0.5"/>
<rect x="1080.71" y="942.00" width="6.90" height="5.40" fill="#e41a1c" stroke="#e3100f" stroke-width="0.5"/>
<rect x="1080.71" y="800.00" width="6.90" height="142.00" fill="#3a85a8" stroke="#2e7fab" stroke-width="0.5"/>
<rect x="1080.71" y="793.90" width="6.90" height="6.10" fill="#629363" stroke="#58905e" stroke-width="0.5"/>
<rect x="1080.71" y="790.00" width="6.90" height="3.90" fill="#fecb23" stroke="#ffc50f" stroke-width="0.5"/>
<rect x="1080.71" y="597.00" width="6.90" height="193.00" fill="#bb852b" stroke="#b77c1d" stroke-width="0.5"/>
<rect x="1080.71" y="550.90" width="6.90" height="46.10" fill="#999999" stroke="#949494" stroke-width="0.5"/>
<rect x="1080.71" y="523.00" width="6.90" height="27.90" fill="#c55e58" stroke="#c4544f" stroke-width="0.5"/>
<rect x="1080.71" y="502.00" width="6.90" height="21.00" fill="#e97aab" stroke="#e8639c" stroke-width="0.5"/>
<rect x="1090.74" y="940.00" width="6.90" height="7.40" fill="#e41a1c" stroke="#e3100f" stroke-width="0.5"/>
<rect x="1090.74" y="797.00" width="6.90" height="143.00" fill="#3a85a8" stroke="#2e7fab" stroke-width="0.5"/>
<rect x="1090.74" y="792.00" width="6.90" height="5.00" fill="#629363" stroke="#58905e" stroke-width="0.5"/>
<rect x="1090.74" y="785.90" width="6.90" height="6.10" fill="#fecb23" stroke="#ffc50f" stroke-width="0.5"/>
<rect x="1090.74" y="581.90" width="6.90" height="204.00" fill="#bb852b" stroke="#b77c1d" stroke-width="0.5"/>
<rect x="1090.74" y="541.70" width="6.90" height="40.20" fill="#999999" stroke="#949494" stroke-width="0.5"/>
<rect x="1090.74" y="513.80" width="6.90" height="27.90" fill="#c55e58" stroke="#c4544f" stroke-width="0.5"/>
<rect x="1090.74" y="499.90" width="6.90" height="13.90" fill="#e97aab" stroke="#e8639c" stroke-width="0.5"/>
<rect x="1101.12" y="945.10" width="6.90" height="2.30" fill="#e41a1c" stroke="#e3100f" stroke-width="0.5"/>
<rect x="1101.12" y="811.00" width="6.90" height="134.10" fill="#3a85a8" stroke="#2e7fab" stroke-width="0.5"/>
<rect x="1101.12" y="806.00" width="6.90" height="5.00" fill="#629363" stroke="#58905e" stroke-width="0.5"/>
<rect x="1101.12" y="800.90" width="6.90" height="5.10" fill="#fecb23" stroke="#ffc50f" stroke-width="0.5"/>
<rect x="1101.12" y="580.90" width="6.90" height="220.00" fill="#bb852b" stroke="#b77c1d" stroke-width="0.5"/>
<rect x="1101.12" y="527.90" width="6.90" height="53.00" fill="#999999" stroke="#949494" stroke-width="0.5"/>
<rect x="1101.12" y="498.90" width="6.90" height="29.00" fill="#c55e58" stroke="#c4544f" stroke-width="0.5"/>
<rect x="1101.12" y="481.00" width="6.90" height="17.90" fill="#e97aab" stroke="#e8639c" stroke-width="0.5"/>
<rect x="1111.49" y="941.00" width="6.90" height="6.40" fill="#e41a1c" stroke="#e3100f" stroke-width="0.5"/>
<rect x="1111.49" y="786.90" width="6.90" height="154.10" fill="#3a85a8" stroke="#2e7fab" stroke-width="0.5"/>
<rect x="1111.49" y="781.00" width="6.90" height="5.90" fill="#629363" stroke="#58905e" stroke-width="0.5"/>
<rect x="1111.49" y="777.00" width="6.90" height="4.00" fill="#fecb23" stroke="#ffc50f" stroke-width="0.5"/>
<rect x="1111.49" y="606.80" width="6.90" height="170.20" fill="#bb852b" stroke="#b77c1d" stroke-width="0.5"/>
<rect x="1111.49" y="557.90" width="6.90" height="48.90" fill="#999999" stroke="#949494" stroke-width="0.5"/>
<rect x="1111.49" y="536.10" width="6.90" height="21.80" fill="#c55e58" stroke="#c4544f" stroke-width="0.5"/>
<rect x="1111.49" y="518.00" width="6.90" height="18.10" fill="#e97aab" stroke="#e8639c" stroke-width="0.5"/>
<rect x="1121.52" y="942.90" width="6.90" height="4.50" fill="#e41a1c" stroke="#e3100f" stroke-width="0.5"/>
<rect x="1121.52" y="819.00" width="6.90" height="123.90" fill="#3a85a8" stroke="#2e7fab" stroke-width="0.5"/>
<rect x="1121.52" y="814.00" width="6.90" height="5.00" fill="#629363" stroke="#58905e" stroke-width="0.5"/>
<rect x="1121.52" y="811.90" width="6.90" height="2.10" fill="#fecb23" stroke="#ffc50f" stroke-width="0.5"/>
<rect x="1121.52" y="613.90" width="6.90" height="198.00" fill="#bb852b" stroke="#b77c1d" stroke-width="0.5"/>
<rect x="1121.52" y="565.80" width="6.90" height="48.10" fill="#999999" stroke="#949494" stroke-width="0.5"/>
<rect x="1121.52" y="544.00" width="6.90" height="21.80" fill="#c55e58" stroke="#c4544f" stroke-width="0.5"/>
<rect x="1121.52" y="524.00" width="6.90" height="20.00" fill="#e97aab" stroke="#e8639c" stroke-width="0.5"/>
<rect x="1131.89" y="940.00" width="6.90" height="7.40" fill="#e41a1c" stroke="#e3100f" stroke-width="0.5"/>
<rect x="1131.89" y="761.90" width="6.90" height="178.10" fill="#3a85a8" stroke="#2e7fab" stroke-width="0.5"/>
<rect x="1131.89" y="756.00" width="6.90" height="5.90" fill="#629363" stroke="#58905e" stroke-width="0.5"/>
<rect x="1131.89" y="753.00" width="6.90" height="3.00" fill="#fecb23" stroke="#ffc50f" stroke-width="0.5"/>
<rect x="1131.89" y="583.80" width="6.90" height="169.20" fill="#bb852b" stroke="#b77c1d" stroke-width="0.5"/>
<rect x="1131.89" y="533.00" width="6.90" height="50.80" fill="#999999" stroke="#949494" stroke-width="0.5"/>
<rect x="1131.89" y="509.90" width="6.90" height="23.10" fill="#c55e58" stroke="#c4544f" stroke-width="0.5"/>
<rect x="1131.89" y="491.00" width="6.90" height="18.90" fill="#e97aab" stroke="#e8639c" stroke-width="0.5"/>
<rect x="1141.93" y="929.90" width="6.90" height="17.50" fill="#e41a1c" stroke="#e3100f" stroke-width="0.5"/>
<rect x="1141.93" y="721.00" width="6.90" height="208.90" fill="#3a85a8" stroke="#2e7fab" stroke-width="0.5"/>
<rect x="1141.93" y="718.10" width="6.90" height="2.90" fill="#629363" stroke="#58905e" stroke-width="0.5"/>
<rect x="1141.93" y="715.00" width="6.90" height="3.10" fill="#fecb23" stroke="#ffc50f" stroke-width="0.5"/>
<rect x="1141.93" y="554.80" width="6.90" height="160.20" fill="#bb852b" stroke="#b77c1d" stroke-width="0.5"/>
<rect x="1141.93" y="495.80" width="6.90" height="59.00" fill="#999999" stroke="#949494" stroke-width="0.5"/>
<rect x="1141.93" y="468.90" width="6.90" height="26.90" fill="#c55e58" stroke="#c4544f" stroke-width="0.5"/>
<rect x="1141.93" y="444.00" width="6.90" height="24.90" fill="#e97aab" stroke="#e8639c" stroke-width="0.5"/>
<rect x="1152.30" y="939.00" width="6.90" height="8.40" fill="#e41a1c" stroke="#e3100f" stroke-width="0.5"/>
<rect x="1152.30" y="743.00" width="6.90" height="196.00" fill="#3a85a8" stroke="#2e7fab" stroke-width="0.5"/>
<rect x="1152.30" y="736.00" width="6.90" height="7.00" fill="#629363" stroke="#58905e" stroke-width="0.5"/>
<rect x="1152.30" y="733.10" width="6.90" height="2.90" fill="#fecb23" stroke="#ffc50f" stroke-width="0.5"/>
<rect x="1152.30" y="558.90" width="6.90" height="174.20" fill="#bb852b" stroke="#b77c1d" stroke-width="0.5"/>
<rect x="1152.30" y="521.00" width="6.90" height="37.90" fill="#999999" stroke="#949494" stroke-width="0.5"/>
<rect x="1152.30" y="491.00" width="6.90" height="30.00" fill="#c55e58" stroke="#c4544f" stroke-width="0.5"/>
<rect x="1152.30" y="463.00" width="6.90" height="28.00" fill="#e97aab" stroke="#e8639c" stroke-width="0.5"/>
<rect x="1162.67" y="941.00" width="6.90" height="6.40" fill="#e41a1c" stroke="#e3100f" stroke-width="0.5"/>
<rect x="1162.67" y="762.90" width="6.90" height="178.10" fill="#3a85a8" stroke="#2e7fab" stroke-width="0.5"/>
<rect x="1162.67" y="757.00" width="6.90" height="5.90" fill="#629363" stroke="#58905e" stroke-width="0.5"/>
<rect x="1162.67" y="754.00" width="6.90" height="3.00" fill="#fecb23" stroke="#ffc50f" stroke-width="0.5"/>
<rect x="1162.67" y="552.00" width="6.90" height="202.00" fill="#bb852b" stroke="#b77c1d" stroke-width="0.5"/>
<rect x="1162.67" y="523.00" width="6.90" height="29.00" fill="#999999" stroke="#949494" stroke-width="0.5"/>
<rect x="1162.67" y="488.90" width="6.90" height="34.10" fill="#c55e58" stroke="#c4544f" stroke-width="0.5"/>
<rect x="1162.67" y="465.00" width="6.90" height="23.90" fill="#e97aab" stroke="#e8639c" stroke-width="0.5"/>
<rect x="1172.04" y="942.00" width="6.90" height="5.40" fill="#e41a1c" stroke="#e3100f" stroke-width="0.5"/>
<rect x="1172.04" y="750.00" width="6.90" height="192.00" fill="#3a85a8" stroke="#2e7fab" stroke-width="0.5"/>
<rect x="1172.04" y="743.00" width="6.90" height="7.00" fill="#629363" stroke="#58905e" stroke-width="0.5"/>
<rect x="1172.04" y="741.00" width="6.90" height="2.00" fill="#fecb23" stroke="#ffc50f" stroke-width="0.5"/>
<rect x="1172.04" y="474.00" width="6.90" height="267.00" fill="#bb852b" stroke="#b77c1d" stroke-width="0.5"/>
<rect x="1172.04" y="406.00" width="6.90" height="68.00" fill="#999999" stroke="#949494" stroke-width="0.5"/>
<rect x="1172.04" y="377.00" width="6.90" height="29.00" fill="#c55e58" stroke="#c4544f" stroke-width="0.5"/>
<rect x="1172.04" y="354.00" width="6.90" height="23.00" fill="#e97aab" stroke="#e8639c" stroke-width="0.5"/>
<rect x="1182.41" y="937.00" width="6.90" height="10.40" fill="#e41a1c" stroke="#e3100f" stroke-width="0.5"/>
<rect x="1182.41" y="749.00" width="6.90" height="188.00" fill="#3a85a8" stroke="#2e7fab" stroke-width="0.5"/>
<rect x="1182.41" y="742.00" width="6.90" height="7.00" fill="#629363" stroke="#58905e" stroke-width="0.5"/>
<rect x="1182.41" y="738.90" width="6.90" height="3.10" fill="#fecb23" stroke="#ffc50f" stroke-width="0.5"/>
<rect x="1182.41" y="545.90" width="6.90" height="193.00" fill="#bb852b" stroke="#b77c1d" stroke-width="0.5"/>
<rect x="1182.41" y="502.00" width="6.90" height="43.90" fill="#999999" stroke="#949494" stroke-width="0.5"/>
<rect x="1182.41" y="477.90" width="6.90" height="24.10" fill="#c55e58" stroke="#c4544f" stroke-width="0.5"/>
<rect x="1182.41" y="456.10" width="6.90" height="21.80" fill="#e97aab" stroke="#e8639c" stroke-width="0.5"/>
<rect x="1192.44" y="941.00" width="6.90" height="6.40" fill="#e41a1c" stroke="#e3100f" stroke-width="0.5"/>
<rect x="1192.44" y="789.00" width="6.90" height="152.00" fill="#3a85a8" stroke="#2e7fab" stroke-width="0.5"/>
<rect x="1192.44" y="783.00" width="6.90" height="6.00" fill="#629363" stroke="#58905e" stroke-width="0.5"/>
<rect x="1192.44" y="777.90" width="6.90" height="5.10" fill="#fecb23" stroke="#ffc50f" stroke-width="0.5"/>
<rect x="1192.44" y="560.90" width="6.90" height="217.00" fill="#bb852b" stroke="#b77c1d" stroke-width="0.5"/>
<rect x="1192.44" y="510.90" width="6.90" height="50.00" fill="#999999" stroke="#949494" stroke-width="0.5"/>
<rect x="1192.44" y="485.00" width="6.90" height="25.90" fill="#c55e58" stroke="#c4544f" stroke-width="0.5"/>
<rect x="1192.44" y="463.00" width="6.90" height="22.00" fill="#e97aab" stroke="#e8639c" stroke-width="0.5"/>
<rect x="1202.81" y="940.00" width="6.90" height="7.40" fill="#e41a1c" stroke="#e3100f" stroke-width="0.5"/>
<rect x="1202.81" y="803.00" width="6.90" height="137.00" fill="#3a85a8" stroke="#2e7fab" stroke-width="0.5"/>
<rect x="1202.81" y="797.00" width="6.90" height="6.00" fill="#629363" stroke="#58905e" stroke-width="0.5"/>
<rect x="1202.81" y="790.00" width="6.90" height="7.00" fill="#fecb23" stroke="#ffc50f" stroke-width="0.5"/>
<rect x="1202.81" y="546.90" width="6.90" height="243.10" fill="#bb852b" stroke="#b77c1d" stroke-width="0.5"/>
<rect x="1202.81" y="496.90" width="6.90" height="50.00" fill="#999999" stroke="#949494" stroke-width="0.5"/>
<rect x="1202.81" y="471.00" width="6.90" height="25.90" fill="#c55e58" stroke="#c4544f" stroke-width="0.5"/>
<rect x="1202.81" y="453.00" width="6.90" height="18.00" fill="#e97aab" stroke="#e8639c" stroke-width="0.5"/>
<rect x="1212.85" y="942.90" width="6.90" height="4.50" fill="#e41a1c" stroke="#e3100f" stroke-width="0.5"/>
<rect x="1212.85" y="807.00" width="6.90" height="135.90" fill="#3a85a8" stroke="#2e7fab" stroke-width="0.5"/>
<rect x="1212.85" y="802.00" width="6.90" height="5.00" fill="#629363" stroke="#58905e" stroke-width="0.5"/>
<rect x="1212.85" y="797.00" width="6.90" height="5.00" fill="#fecb23" stroke="#ffc50f" stroke-width="0.5"/>
<rect x="1212.85" y="605.00" width="6.90" height="192.00" fill="#bb852b" stroke="#b77c1d" stroke-width="0.5"/>
<rect x="1212.85" y="557.90" width="6.90" height="47.10" fill="#999999" stroke="#949494" stroke-width="0.5"/>
<rect x="1212.85" y="534.00" width="6.90" height="23.90" fill="#c55e58" stroke="#c4544f" stroke-width="0.5"/>
<rect x="1212.85" y="515.10" width="6.90" height="18.90" fill="#e97aab" stroke="#e8639c" stroke-width="0.5"/>
<rect x="1223.22" y="941.00" width="6.90" height="6.40" fill="#e41a1c" stroke="#e3100f" stroke-width="0.5"/>
<rect x="1223.22" y="815.00" width="6.90" height="126.00" fill="#3a85a8" stroke="#2e7fab" stroke-width="0.5"/>
<rect x="1223.22" y="808.90" width="6.90" height="6.10" fill="#629363" stroke="#58905e" stroke-width="0.5"/>
<rect x="1223.22" y="800.90" width="6.90" height="8.00" fill="#fecb23" stroke="#ffc50f" stroke-width="0.5"/>
<rect x="1223.22" y="604.00" width="6.90" height="196.90" fill="#bb852b" stroke="#b77c1d" stroke-width="0.5"/>
<rect x="1223.22" y="557.90" width="6.90" height="46.10" fill="#999999" stroke="#949494" stroke-width="0.5"/>
<rect x="1223.22" y="533.00" width="6.90" height="24.90" fill="#c55e58" stroke="#c4544f" stroke-width="0.5"/>
<rect x="1223.22" y="517.10" width="6.90" height="15.90" fill="#e97aab" stroke="#e8639c" stroke-width="0.5"/>
<rect x="1233.59" y="942.90" width="6.90" height="4.50" fill="#e41a1c" stroke="#e3100f" stroke-width="0.5"/>
<rect x="1233.59" y="822.00" width="6.90" height="120.90" fill="#3a85a8" stroke="#2e7fab" stroke-width="0.5"/>
<rect x="1233.59" y="815.90" width="6.90" height="6.10" fill="#629363" stroke="#58905e" stroke-width="0.5"/>
<rect x="1233.59" y="807.90" width="6.90" height="8.00" fill="#fecb23" stroke="#ffc50f" stroke-width="0.5"/>
<rect x="1233.59" y="633.90" width="6.90" height="174.00" fill="#bb852b" stroke="#b77c1d" stroke-width="0.5"/>
<rect x="1233.59" y="589.90" width="6.90" height="44.00" fill="#999999" stroke="#949494" stroke-width="0.5"/>
<rect x="1233.59" y="566.90" width="6.90" height="23.00" fill="#c55e58" stroke="#c4544f" stroke-width="0.5"/>
<rect x="1233.59" y="552.00" width="6.90" height="14.90" fill="#e97aab" stroke="#e8639c" stroke-width="0.5"/>
<rect x="1243.62" y="937.80" width="6.90" height="9.60" fill="#e41a1c" stroke="#e3100f" stroke-width="0.5"/>
<rect x="1243.62" y="786.00" width="6.90" height="151.80" fill="#3a85a8" stroke="#2e7fab" stroke-width="0.5"/>
<rect x="1243.62" y="781.10" width="6.90" height="4.90" fill="#629363" stroke="#58905e" stroke-width="0.5"/>
<rect x="1243.62" y="775.00" width="6.90" height="6.10" fill="#fecb23" stroke="#ffc50f" stroke-width="0.5"/>
<rect x="1243.62" y="593.90" width="6.90" height="181.10" fill="#bb852b" stroke="#b77c1d" stroke-width="0.5"/>
<rect x="1243.62" y="538.80" width="6.90" height="55.10" fill="#999999" stroke="#949494" stroke-width="0.5"/>
<rect x="1243.62" y="512.90" width="6.90" height="25.90" fill="#c55e58" stroke="#c4544f" stroke-width="0.5"/>
<rect x="1243.62" y="498.00" width="6.90" height="14.90" fill="#e97aab" stroke="#e8639c" stroke-width="0.5"/>
<rect x="1254.00" y="945.10" width="6.90" height="2.30" fill="#e41a1c" stroke="#e3100f" stroke-width="0.5"/>
<rect x="1254.00" y="763.00" width="6.90" height="182.10" fill="#3a85a8" stroke="#2e7fab" stroke-width="0.5"/>
<rect x="1254.00" y="756.90" width="6.90" height="6.10" fill="#629363" stroke="#58905e" stroke-width="0.5"/>
<rect x="1254.00" y="755.00" width="6.90" height="1.90" fill="#fecb23" stroke="#ffc50f" stroke-width="0.5"/>
<rect x="1254.00" y="562.90" width="6.90" height="192.10" fill="#bb852b" stroke="#b77c1d" stroke-width="0.5"/>
<rect x="1254.00" y="505.00" width="6.90" height="57.90" fill="#999999" stroke="#949494" stroke-width="0.5"/>
<rect x="1254.00" y="477.90" width="6.90" height="27.10" fill="#c55e58" stroke="#c4544f" stroke-width="0.5"/>
<rect x="1254.00" y="456.10" width="6.90" height="21.80" fill="#e97aab" stroke="#e8639c" stroke-width="0.5"/>
<rect x="1264.03" y="941.00" width="6.90" height="6.40" fill="#e41a1c" stroke="#e3100f" stroke-width="0.5"/>
<rect x="1264.03" y="773.90" width="6.90" height="167.10" fill="#3a85a8" stroke="#2e7fab" stroke-width="0.5"/>
<rect x="1264.03" y="768.00" width="6.90" height="5.90" fill="#629363" stroke="#58905e" stroke-width="0.5"/>
<rect x="1264.03" y="763.00" width="6.90" height="5.00" fill="#fecb23" stroke="#ffc50f" stroke-width="0.5"/>
<rect x="1264.03" y="583.90" width="6.90" height="179.10" fill="#bb852b" stroke="#b77c1d" stroke-width="0.5"/>
<rect x="1264.03" y="531.90" width="6.90" height="52.00" fill="#999999" stroke="#949494" stroke-width="0.5"/>
<rect x="1264.03" y="509.10" width="6.90" height="22.80" fill="#c55e58" stroke="#c4544f" stroke-width="0.5"/>
<rect x="1264.03" y="487.00" width="6.90" height="22.10" fill="#e97aab" stroke="#e8639c" stroke-width="0.5"/>
<rect x="1274.40" y="941.00" width="6.90" height="6.40" fill="#e41a1c" stroke="#e3100f" stroke-width="0.5"/>
<rect x="1274.40" y="740.00" width="6.90" height="201.00" fill="#3a85a8" stroke="#2e7fab" stroke-width="0.5"/>
<rect x="1274.40" y="735.10" width="6.90" height="4.90" fill="#629363" stroke="#58905e" stroke-width="0.5"/>
<rect x="1274.40" y="731.00" width="6.90" height="4.10" fill="#fecb23" stroke="#ffc50f" stroke-width="0.5"/>
<rect x="1274.40" y="571.80" width="6.90" height="159.20" fill="#bb852b" stroke="#b77c1d" stroke-width="0.5"/>
<rect x="1274.40" y="515.00" width="6.90" height="56.80" fill="#999999" stroke="#949494" stroke-width="0.5"/>
<rect x="1274.40" y="484.00" width="6.90" height="31.00" fill="#c55e58" stroke="#c4544f" stroke-width="0.5"/>
<rect x="1274.40" y="459.10" width="6.90" height="24.90" fill="#e97aab" stroke="#e8639c" stroke-width="0.5"/>
<rect x="1284.77" y="940.00" width="6.90" height="7.40" fill="#e41a1c" stroke="#e3100f" stroke-width="0.5"/>
<rect x="1284.77" y="770.00" width="6.90" height="170.00" fill="#3a85a8" stroke="#2e7fab" stroke-width="0.5"/>
<rect x="1284.77" y="763.90" width="6.90" height="6.10" fill="#629363" stroke="#58905e" stroke-width="0.5"/>
<rect x="1284.77" y="762.00" width="6.90" height="1.90" fill="#fecb23" stroke="#ffc50f" stroke-width="0.5"/>
<rect x="1284.77" y="599.80" width="6.90" height="162.20" fill="#bb852b" stroke="#b77c1d" stroke-width="0.5"/>
<rect x="1284.77" y="549.00" width="6.90" height="50.80" fill="#999999" stroke="#949494" stroke-width="0.5"/>
<rect x="1284.77" y="520.00" width="6.90" height="29.00" fill="#c55e58" stroke="#c4544f" stroke-width="0.5"/>
<rect x="1284.77" y="498.00" width="6.90" height="22.00" fill="#e97aab" stroke="#e8639c" stroke-width="0.5"/>
<rect x="1294.14" y="939.00" width="6.90" height="8.40" fill="#e41a1c" stroke="#e3100f" stroke-width="0.5"/>
<rect x="1294.14" y="751.90" width="6.90" height="187.10" fill="#3a85a8" stroke="#2e7fab" stroke-width="0.5"/>
<rect x="1294.14" y="747.00" width="6.90" height="4.90" fill="#629363" stroke="#58905e" stroke-width="0.5"/>
<rect x="1294.14" y="744.00" width="6.90" height="3.00" fill="#fecb23" stroke="#ffc50f" stroke-width="0.5"/>
<rect x="1294.14" y="579.80" width="6.90" height="164.20" fill="#bb852b" stroke="#b77c1d" stroke-width="0.5"/>
<rect x="1294.14" y="504.00" width="6.90" height="75.80" fill="#999999" stroke="#949494" stroke-width="0.5"/>
<rect x="1294.14" y="476.90" width="6.90" height="27.10" fill="#c55e58" stroke="#c4544f" stroke-width="0.5"/>
<rect x="1294.14" y="454.00" width="6.90" height="22.90" fill="#e97aab" stroke="#e8639c" stroke-width="0.5"/>
<rect x="1304.51" y="939.00" width="6.90" height="8.40" fill="#e41a1c" stroke="#e3100f" stroke-width="0.5"/>
<rect x="1304.51" y="757.90" width="6.90" height="181.10" fill="#3a85a8" stroke="#2e7fab" stroke-width="0.5"/>
<rect x="1304.51" y="753.00" width="6.90" height="4.90" fill="#629363" stroke="#58905e" stroke-width="0.5"/>
<rect x="1304.51" y="750.90" width="6.90" height="2.10" fill="#fecb23" stroke="#ffc50f" stroke-width="0.5"/>
<rect x="1304.51" y="602.80" width="6.90" height="148.10" fill="#bb852b" stroke="#b77c1d" stroke-width="0.5"/>
<rect x="1304.51" y="550.80" width="6.90" height="52.00" fill="#999999" stroke="#949494" stroke-width="0.5"/>
<rect x="1304.51" y="525.00" width="6.90" height="25.80" fill="#c55e58" stroke="#c4544f" stroke-width="0.5"/>
<rect x="1304.51" y="502.90" width="6.90" height="22.10" fill="#e97aab" stroke="#e8639c" stroke-width="0.5"/>
<rect x="1314.55" y="940.00" width="6.90" height="7.40" fill="#e41a1c" stroke="#e3100f" stroke-width="0.5"/>
<rect x="1314.55" y="772.90" width="6.90" height="167.10" fill="#3a85a8" stroke="#2e7fab" stroke-width="0.5"/>
<rect x="1314.55" y="769.00" width="6.90" height="3.90" fill="#629363" stroke="#58905e" stroke-width="0.5"/>
<rect x="1314.55" y="766.90" width="6.90" height="2.10" fill="#fecb23" stroke="#ffc50f" stroke-width="0.5"/>
<rect x="1314.55" y="596.70" width="6.90" height="170.20" fill="#bb852b" stroke="#b77c1d" stroke-width="0.5"/>
<rect x="1314.55" y="547.00" width="6.90" height="49.70" fill="#999999" stroke="#949494" stroke-width="0.5"/>
<rect x="1314.55" y="520.00" width="6.90" height="27.00" fill="#c55e58" stroke="#c4544f" stroke-width="0.5"/>
<rect x="1314.55" y="499.10" width="6.90" height="20.90" fill="#e97aab" stroke="#e8639c" stroke-width="0.5"/>
<rect x="1324.92" y="939.00" width="6.90" height="8.40" fill="#e41a1c" stroke="#e3100f" stroke-width="0.5"/>
<rect x="1324.92" y="781.10" width="6.90" height="157.90" fill="#3a85a8" stroke="#2e7fab" stroke-width="0.5"/>
<rect x="1324.92" y="777.00" width="6.90" height="4.10" fill="#629363" stroke="#58905e" stroke-width="0.5"/>
<rect x="1324.92" y="775.00" width="6.90" height="2.00" fill="#fecb23" stroke="#ffc50f" stroke-width="0.5"/>
<rect x="1324.92" y="611.00" width="6.90" height="164.00" fill="#bb852b" stroke="#b77c1d" stroke-width="0.5"/>
<rect x="1324.92" y="560.00" width="6.90" height="51.00" fill="#999999" stroke="#949494" stroke-width="0.5"/>
<rect x="1324.92" y="531.90" width="6.90" height="28.10" fill="#c55e58" stroke="#c4544f" stroke-width="0.5"/>
<rect x="1324.92" y="516.00" width="6.90" height="15.90" fill="#e97aab" stroke="#e8639c" stroke-width="0.5"/>
<rect x="1334.95" y="942.90" width="6.90" height="4.50" fill="#e41a1c" stroke="#e3100f" stroke-width="0.5"/>
<rect x="1334.95" y="790.00" width="6.90" height="152.90" fill="#3a85a8" stroke="#2e7fab" stroke-width="0.5"/>
<rect x="1334.95" y="786.00" width="6.90" height="4.00" fill="#629363" stroke="#58905e" stroke-width="0.5"/>
<rect x="1334.95" y="784.00" width="6.90" height="2.00" fill="#fecb23" stroke="#ffc50f" stroke-width="0.5"/>
<rect x="1334.95" y="610.00" width="6.90" height="174.00" fill="#bb852b" stroke="#b77c1d" stroke-width="0.5"/>
<rect x="1334.95" y="567.00" width="6.90" height="43.00" fill="#999999" stroke="#949494" stroke-width="0.5"/>
<rect x="1334.95" y="537.00" width="6.90" height="30.00" fill="#c55e58" stroke="#c4544f" stroke-width="0.5"/>
<rect x="1334.95" y="518.00" width="6.90" height="19.00" fill="#e97aab" stroke="#e8639c" stroke-width="0.5"/>
<rect x="1345.32" y="940.00" width="6.90" height="7.40" fill="#e41a1c" stroke="#e3100f" stroke-width="0.5"/>
<rect x="1345.32" y="794.00" width="6.90" height="146.00" fill="#3a85a8" stroke="#2e7fab" stroke-width="0.5"/>
<rect x="1345.32" y="790.00" width="6.90" height="4.00" fill="#629363" stroke="#58905e" stroke-width="0.5"/>
<rect x="1345.32" y="787.90" width="6.90" height="2.10" fill="#fecb23" stroke="#ffc50f" stroke-width="0.5"/>
<rect x="1345.32" y="612.00" width="6.90" height="175.90" fill="#bb852b" stroke="#b77c1d" stroke-width="0.5"/>
<rect x="1345.32" y="573.90" width="6.90" height="38.10" fill="#999999" stroke="#949494" stroke-width="0.5"/>
<rect x="1345.32" y="546.00" width="6.90" height="27.90" fill="#c55e58" stroke="#c4544f" stroke-width="0.5"/>
<rect x="1345.32" y="527.00" width="6.90" height="19.00" fill="#e97aab" stroke="#e8639c" stroke-width="0.5"/>
<rect x="1355.69" y="936.00" width="6.90" height="11.40" fill="#e41a1c" stroke="#e3100f" stroke-width="0.5"/>
<rect x="1355.69" y="773.90" width="6.90" height="162.10" fill="#3a85a8" stroke="#2e7fab" stroke-width="0.5"/>
<rect x="1355.69" y="769.00" width="6.90" height="4.90" fill="#629363" stroke="#58905e" stroke-width="0.5"/>
<rect x="1355.69" y="766.90" width="6.90" height="2.10" fill="#fecb23" stroke="#ffc50f" stroke-width="0.5"/>
<rect x="1355.69" y="572.90" width="6.90" height="194.00" fill="#bb852b" stroke="#b77c1d" stroke-width="0.5"/>
<rect x="1355.69" y="529.90" width="6.90" height="43.00" fill="#999999" stroke="#949494" stroke-width="0.5"/>
<rect x="1355.69" y="498.90" width="6.90" height="31.00" fill="#c55e58" stroke="#c4544f" stroke-width="0.5"/>
<rect x="1355.69" y="478.90" width="6.90" height="20.00" fill="#e97aab" stroke="#e8639c" stroke-width="0.5"/>
<rect x="1365.73" y="941.00" width="6.90" height="6.40" fill="#e41a1c" stroke="#e3100f" stroke-width="0.5"/>
<rect x="1365.73" y="791.00" width="6.90" height="150.00" fill="#3a85a8" stroke="#2e7fab" stroke-width="0.5"/>
<rect x="1365.73" y="785.00" width="6.90" height="6.00" fill="#629363" stroke="#58905e" stroke-width="0.5"/>
<rect x="1365.73" y="783.00" width="6.90" height="2.00" fill="#fecb23" stroke="#ffc50f" stroke-width="0.5"/>
<rect x="1365.73" y="607.70" width="6.90" height="175.30" fill="#bb852b" stroke="#b77c1d" stroke-width="0.5"/>
<rect x="1365.73" y="567.00" width="6.90" height="40.70" fill="#999999" stroke="#949494" stroke-width="0.5"/>
<rect x="1365.73" y="537.00" width="6.90" height="30.00" fill="#c55e58" stroke="#c4544f" stroke-width="0.5"/>
<rect x="1365.73" y="521.90" width="6.90" height="15.10" fill="#e97aab" stroke="#e8639c" stroke-width="0.5"/>
<rect x="1376.10" y="937.00" width="6.90" height="10.40" fill="#e41a1c" stroke="#e3100f" stroke-width="0.5"/>
<rect x="1376.10" y="780.00" width="6.90" height="157.00" fill="#3a85a8" stroke="#2e7fab" stroke-width="0.5"/>
<rect x="1376.10" y="775.00" width="6.90" height="5.00" fill="#629363" stroke="#58905e" stroke-width="0.5"/>
<rect x="1376.10" y="772.90" width="6.90" height="2.10" fill="#fecb23" stroke="#ffc50f" stroke-width="0.5"/>
<rect x="1376.10" y="597.70" width="6.90" height="175.20" fill="#bb852b" stroke="#b77c1d" stroke-width="0.5"/>
<rect x="1376.10" y="548.00" width="6.90" height="49.70" fill="#999999" stroke="#949494" stroke-width="0.5"/>
<rect x="1376.10" y="522.90" width="6.90" height="25.10" fill="#c55e58" stroke="#c4544f" stroke-width="0.5"/>
<rect x="1376.10" y="496.00" width="6.90" height="26.90" fill="#e97aab" stroke="#e8639c" stroke-width="0.5"/>
<rect x="1386.13" y="937.00" width="6.90" height="10.40" fill="#e41a1c" stroke="#e3100f" stroke-width="0.5"/>
<rect x="1386.13" y="755.00" width="6.90" height="182.00" fill="#3a85a8" stroke="#2e7fab" stroke-width="0.5"/>
<rect x="1386.13" y="748.90" width="6.90" height="6.10" fill="#629363" stroke="#58905e" stroke-width="0.5"/>
<rect x="1386.13" y="747.00" width="6.90" height="1.90" fill="#fecb23" stroke="#ffc50f" stroke-width="0.5"/>
<rect x="1386.13" y="536.00" width="6.90" height="211.00" fill="#bb852b" stroke="#b77c1d" stroke-width="0.5"/>
<rect x="1386.13" y="469.90" width="6.90" height="66.10" fill="#999999" stroke="#949494" stroke-width="0.5"/>
<rect x="1386.13" y="444.00" width="6.90" height="25.90" fill="#c55e58" stroke="#c4544f" stroke-width="0.5"/>
<rect x="1386.13" y="422.00" width="6.90" height="22.00" fill="#e97aab" stroke="#e8639c" stroke-width="0.5"/>
<rect x="1396.51" y="937.00" width="6.90" height="10.40" fill="#e41a1c" stroke="#e3100f" stroke-width="0.5"/>
<rect x="1396.51" y="771.90" width="6.90" height="165.10" fill="#3a85a8" stroke="#2e7fab" stroke-width="0.5"/>
<rect x="1396.51" y="767.00" width="6.90" height="4.90" fill="#629363" stroke="#58905e" stroke-width="0.5"/>
<rect x="1396.51" y="765.90" width="6.90" height="1.10" fill="#fecb23" stroke="#ffc50f" stroke-width="0.5"/>
<rect x="1396.51" y="590.80" width="6.90" height="175.10" fill="#bb852b" stroke="#b77c1d" stroke-width="0.5"/>
<rect x="1396.51" y="535.00" width="6.90" height="55.80" fill="#999999" stroke="#949494" stroke-width="0.5"/>
<rect x="1396.51" y="497.00" width="6.90" height="38.00" fill="#c55e58" stroke="#c4544f" stroke-width="0.5"/>
<rect x="1396.51" y="473.00" width="6.90" height="24.00" fill="#e97aab" stroke="#e8639c" stroke-width="0.5"/>
<rect x="1406.88" y="936.00" width="6.90" height="11.40" fill="#e41a1c" stroke="#e3100f" stroke-width="0.5"/>
<rect x="1406.88" y="729.00" width="6.90" height="207.00" fill="#3a85a8" stroke="#2e7fab" stroke-width="0.5"/>
<rect x="1406.88" y="724.00" width="6.90" height="5.00" fill="#629363" stroke="#58905e" stroke-width="0.5"/>
<rect x="1406.88" y="722.00" width="6.90" height="2.00" fill="#fecb23" stroke="#ffc50f" stroke-width="0.5"/>
<rect x="1406.88" y="546.00" width="6.90" height="176.00" fill="#bb852b" stroke="#b77c1d" stroke-width="0.5"/>
<rect x="1406.88" y="489.90" width="6.90" height="56.10" fill="#999999" stroke="#949494" stroke-width="0.5"/>
<rect x="1406.88" y="465.00" width="6.90" height="24.90" fill="#c55e58" stroke="#c4544f" stroke-width="0.5"/>
<rect x="1406.88" y="410.00" width="6.90" height="55.00" fill="#e97aab" stroke="#e8639c" stroke-width="0.5"/>
<rect x="1416.24" y="937.00" width="6.90" height="10.40" fill="#e41a1c" stroke="#e3100f" stroke-width="0.5"/>
<rect x="1416.24" y="755.00" width="6.90" height="182.00" fill="#3a85a8" stroke="#2e7fab" stroke-width="0.5"/>
<rect x="1416.24" y="751.90" width="6.90" height="3.10" fill="#629363" stroke="#58905e" stroke-width="0.5"/>
<rect x="1416.24" y="750.90" width="6.90" height="1.00" fill="#fecb23" stroke="#ffc50f" stroke-width="0.5"/>
<rect x="1416.24" y="569.80" width="6.90" height="181.10" fill="#bb852b" stroke="#b77c1d" stroke-width="0.5"/>
<rect x="1416.24" y="517.00" width="6.90" height="52.80" fill="#999999" stroke="#949494" stroke-width="0.5"/>
<rect x="1416.24" y="485.00" width="6.90" height="32.00" fill="#c55e58" stroke="#c4544f" stroke-width="0.5"/>
<rect x="1416.24" y="448.10" width="6.90" height="36.90" fill="#e97aab" stroke="#e8639c" stroke-width="0.5"/>
<rect x="1426.61" y="939.00" width="6.90" height="8.40" fill="#e41a1c" stroke="#e3100f" stroke-width="0.5"/>
<rect x="1426.61" y="754.00" width="6.90" height="185.00" fill="#3a85a8" stroke="#2e7fab" stroke-width="0.5"/>
<rect x="1426.61" y="748.00" width="6.90" height="6.00" fill="#629363" stroke="#58905e" stroke-width="0.5"/>
<rect x="1426.61" y="747.00" width="6.90" height="1.00" fill="#fecb23" stroke="#ffc50f" stroke-width="0.5"/>
<rect x="1426.61" y="581.80" width="6.90" height="165.20" fill="#bb852b" stroke="#b77c1d" stroke-width="0.5"/>
<rect x="1426.61" y="531.90" width="6.90" height="49.90" fill="#999999" stroke="#949494" stroke-width="0.5"/>
<rect x="1426.61" y="501.90" width="6.90" height="30.00" fill="#c55e58" stroke="#c4544f" stroke-width="0.5"/>
<rect x="1426.61" y="477.90" width="6.90" height="24.00" fill="#e97aab" stroke="#e8639c" stroke-width="0.5"/>
<rect x="1436.65" y="942.90" width="6.90" height="4.50" fill="#e41a1c" stroke="#e3100f" stroke-width="0.5"/>
<rect x="1436.65" y="778.00" width="6.90" height="164.90" fill="#3a85a8" stroke="#2e7fab" stroke-width="0.5"/>
<rect x="1436.65" y="771.90" width="6.90" height="6.10" fill="#629363" stroke="#58905e" stroke-width="0.5"/>
<rect x="1436.65" y="764.90" width="6.90" height="7.00" fill="#fecb23" stroke="#ffc50f" stroke-width="0.5"/>
<rect x="1436.65" y="598.80" width="6.90" height="166.10" fill="#bb852b" stroke="#b77c1d" stroke-width="0.5"/>
<rect x="1436.65" y="549.00" width="6.90" height="49.80" fill="#999999" stroke="#949494" stroke-width="0.5"/>
<rect x="1436.65" y="516.00" width="6.90" height="33.00" fill="#c55e58" stroke="#c4544f" stroke-width="0.5"/>
<rect x="1436.65" y="497.00" width="6.90" height="19.00" fill="#e97aab" stroke="#e8639c" stroke-width="0.5"/>
<rect x="1447.02" y="936.00" width="6.90" height="11.40" fill="#e41a1c" stroke="#e3100f" stroke-width="0.5"/>
<rect x="1447.02" y="790.00" width="6.90" height="146.00" fill="#3a85a8" stroke="#2e7fab" stroke-width="0.5"/>
<rect x="1447.02" y="784.00" width="6.90" height="6.00" fill="#629363" stroke="#58905e" stroke-width="0.5"/>
<rect x="1447.02" y="779.00" width="6.90" height="5.00" fill="#fecb23" stroke="#ffc50f" stroke-width="0.5"/>
<rect x="1447.02" y="624.90" width="6.90" height="154.10" fill="#bb852b" stroke="#b77c1d" stroke-width="0.5"/>
<rect x="1447.02" y="579.00" width="6.90" height="45.90" fill="#999999" stroke="#949494" stroke-width="0.5"/>
<rect x="1447.02" y="550.00" width="6.90" height="29.00" fill="#c55e58" stroke="#c4544f" stroke-width="0.5"/>
<rect x="1447.02" y="531.10" width="6.90" height="18.90" fill="#e97aab" stroke="#e8639c" stroke-width="0.5"/>
<rect x="1457.06" y="937.00" width="6.90" height="10.40" fill="#e41a1c" stroke="#e3100f" stroke-width="0.5"/>
<rect x="1457.06" y="779.00" width="6.90" height="158.00" fill="#3a85a8" stroke="#2e7fab" stroke-width="0.5"/>
<rect x="1457.06" y="771.90" width="6.90" height="7.10" fill="#629363" stroke="#58905e" stroke-width="0.5"/>
<rect x="1457.06" y="769.00" width="6.90" height="2.90" fill="#fecb23" stroke="#ffc50f" stroke-width="0.5"/>
<rect x="1457.06" y="613.00" width="6.90" height="156.00" fill="#bb852b" stroke="#b77c1d" stroke-width="0.5"/>
<rect x="1457.06" y="561.80" width="6.90" height="51.20" fill="#999999" stroke="#949494" stroke-width="0.5"/>
<rect x="1457.06" y="532.90" width="6.90" height="28.90" fill="#c55e58" stroke="#c4544f" stroke-width="0.5"/>
<rect x="1457.06" y="511.90" width="6.90" height="21.00" fill="#e97aab" stroke="#e8639c" stroke-width="0.5"/>
<rect x="1467.43" y="937.80" width="6.90" height="9.60" fill="#e41a1c" stroke="#e3100f" stroke-width="0.5"/>
<rect x="1467.43" y="783.00" width="6.90" height="154.80" fill="#3a85a8" stroke="#2e7fab" stroke-width="0.5"/>
<rect x="1467.43" y="778.00" width="6.90" height="5.00" fill="#629363" stroke="#58905e" stroke-width="0.5"/>
<rect x="1467.43" y="777.00" width="6.90" height="1.00" fill="#fecb23" stroke="#ffc50f" stroke-width="0.5"/>
<rect x="1467.43" y="608.90" width="6.90" height="168.10" fill="#bb852b" stroke="#b77c1d" stroke-width="0.5"/>
<rect x="1467.43" y="560.00" width="6.90" height="48.90" fill="#999999" stroke="#949494" stroke-width="0.5"/>
<rect x="1467.43" y="529.80" width="6.90" height="30.20" fill="#c55e58" stroke="#c4544f" stroke-width="0.5"/>
<rect x="1467.43" y="511.90" width="6.90" height="17.90" fill="#e97aab" stroke="#e8639c" stroke-width="0.5"/>
<rect x="1477.80" y="939.00" width="6.90" height="8.40" fill="#e41a1c" stroke="#e3100f" stroke-width="0.5"/>
<rect x="1477.80" y="796.90" width="6.90" height="142.10" fill="#3a85a8" stroke="#2e7fab" stroke-width="0.5"/>
<rect x="1477.80" y="792.00" width="6.90" height="4.90" fill="#629363" stroke="#58905e" stroke-width="0.5"/>
<rect x="1477.80" y="791.00" width="6.90" height="1.00" fill="#fecb23" stroke="#ffc50f" stroke-width="0.5"/>
<rect x="1477.80" y="634.00" width="6.90" height="157.00" fill="#bb852b" stroke="#b77c1d" stroke-width="0.5"/>
<rect x="1477.80" y="586.80" width="6.90" height="47.20" fill="#999999" stroke="#949494" stroke-width="0.5"/>
<rect x="1477.80" y="558.00" width="6.90" height="28.80" fill="#c55e58" stroke="#c4544f" stroke-width="0.5"/>
<rect x="1477.80" y="536.00" width="6.90" height="22.00" fill="#e97aab" stroke="#e8639c" stroke-width="0.5"/>
<rect x="1487.83" y="937.80" width="6.90" height="9.60" fill="#e41a1c" stroke="#e3100f" stroke-width="0.5"/>
<rect x="1487.83" y="772.90" width="6.90" height="164.90" fill="#3a85a8" stroke="#2e7fab" stroke-width="0.5"/>
<rect x="1487.83" y="769.00" width="6.90" height="3.90" fill="#629363" stroke="#58905e" stroke-width="0.5"/>
<rect x="1487.83" y="768.00" width="6.90" height="1.00" fill="#fecb23" stroke="#ffc50f" stroke-width="0.5"/>
<rect x="1487.83" y="605.00" width="6.90" height="163.00" fill="#bb852b" stroke="#b77c1d" stroke-width="0.5"/>
<rect x="1487.83" y="558.00" width="6.90" height="47.00" fill="#999999" stroke="#949494" stroke-width="0.5"/>
<rect x="1487.83" y="529.80" width="6.90" height="28.20" fill="#c55e58" stroke="#c4544f" stroke-width="0.5"/>
<rect x="1487.83" y="509.00" width="6.90" height="20.80" fill="#e97aab" stroke="#e8639c" stroke-width="0.5"/>
<rect x="1498.20" y="937.00" width="6.90" height="10.40" fill="#e41a1c" stroke="#e3100f" stroke-width="0.5"/>
<rect x="1498.20" y="775.00" width="6.90" height="162.00" fill="#3a85a8" stroke="#2e7fab" stroke-width="0.5"/>
<rect x="1498.20" y="770.00" width="6.90" height="5.00" fill="#629363" stroke="#58905e" stroke-width="0.5"/>
<rect x="1498.20" y="769.00" width="6.90" height="1.00" fill="#fecb23" stroke="#ffc50f" stroke-width="0.5"/>
<rect x="1498.20" y="607.90" width="6.90" height="161.10" fill="#bb852b" stroke="#b77c1d" stroke-width="0.5"/>
<rect x="1498.20" y="550.00" width="6.90" height="57.90" fill="#999999" stroke="#949494" stroke-width="0.5"/>
<rect x="1498.20" y="522.90" width="6.90" height="27.10" fill="#c55e58" stroke="#c4544f" stroke-width="0.5"/>
<rect x="1498.20" y="508.00" width="6.90" height="14.90" fill="#e97aab" stroke="#e8639c" stroke-width="0.5"/>
<rect x="1508.24" y="937.00" width="6.90" height="10.40" fill="#e41a1c" stroke="#e3100f" stroke-width="0.5"/>
<rect x="1508.24" y="741.90" width="6.90" height="195.10" fill="#3a85a8" stroke="#2e7fab" stroke-width="0.5"/>
<rect x="1508.24" y="735.90" width="6.90" height="6.00" fill="#629363" stroke="#58905e" stroke-width="0.5"/>
<rect x="1508.24" y="598.90" width="6.90" height="137.00" fill="#bb852b" stroke="#b77c1d" stroke-width="0.5"/>
<rect x="1508.24" y="542.90" width="6.90" height="56.00" fill="#999999" stroke="#949494" stroke-width="0.5"/>
<rect x="1508.24" y="518.00" width="6.90" height="24.90" fill="#c55e58" stroke="#c4544f" stroke-width="0.5"/>
<rect x="1508.24" y="491.90" width="6.90" height="26.10" fill="#e97aab" stroke="#e8639c" stroke-width="0.5"/>
<rect x="1518.61" y="936.00" width="6.90" height="11.40" fill="#e41a1c" stroke="#e3100f" stroke-width="0.5"/>
<rect x="1518.61" y="709.00" width="6.90" height="227.00" fill="#3a85a8" stroke="#2e7fab" stroke-width="0.5"/>
<rect x="1518.61" y="705.10" width="6.90" height="3.90" fill="#629363" stroke="#58905e" stroke-width="0.5"/>
<rect x="1518.61" y="702.90" width="6.90" height="2.20" fill="#fecb23" stroke="#ffc50f" stroke-width="0.5"/>
<rect x="1518.61" y="551.90" width="6.90" height="151.00" fill="#bb852b" stroke="#b77c1d" stroke-width="0.5"/>
<rect x="1518.61" y="500.90" width="6.90" height="51.00" fill="#999999" stroke="#949494" stroke-width="0.5"/>
<rect x="1518.61" y="473.00" width="6.90" height="27.90" fill="#c55e58" stroke="#c4544f" stroke-width="0.5"/>
<rect x="1518.61" y="449.10" width="6.90" height="23.90" fill="#e97aab" stroke="#e8639c" stroke-width="0.5"/>
<rect x="1528.98" y="939.00" width="6.90" height="8.40" fill="#e41a1c" stroke="#e3100f" stroke-width="0.5"/>
<rect x="1528.98" y="745.00" width="6.90" height="194.00" fill="#3a85a8" stroke="#2e7fab" stroke-width="0.5"/>
<rect x="1528.98" y="739.00" width="6.90" height="6.00" fill="#629363" stroke="#58905e" stroke-width="0.5"/>
<rect x="1528.98" y="738.00" width="6.90" height="1.00" fill="#fecb23" stroke="#ffc50f" stroke-width="0.5"/>
<rect x="1528.98" y="589.00" width="6.90" height="149.00" fill="#bb852b" stroke="#b77c1d" stroke-width="0.5"/>
<rect x="1528.98" y="534.90" width="6.90" height="54.10" fill="#999999" stroke="#949494" stroke-width="0.5"/>
<rect x="1528.98" y="511.10" width="6.90" height="23.80" fill="#c55e58" stroke="#c4544f" stroke-width="0.5"/>
<rect x="1528.98" y="485.00" width="6.90" height="26.10" fill="#e97aab" stroke="#e8639c" stroke-width="0.5"/>
<rect x="1538.68" y="944.10" width="6.90" height="3.30" fill="#e41a1c" stroke="#e3100f" stroke-width="0.5"/>
<rect x="1538.68" y="759.00" width="6.90" height="185.10" fill="#3a85a8" stroke="#2e7fab" stroke-width="0.5"/>
<rect x="1538.68" y="753.00" width="6.90" height="6.00" fill="#629363" stroke="#58905e" stroke-width="0.5"/>
<rect x="1538.68" y="752.00" width="6.90" height="1.00" fill="#fecb23" stroke="#ffc50f" stroke-width="0.5"/>
<rect x="1538.68" y="608.90" width="6.90" height="143.10" fill="#bb852b" stroke="#b77c1d" stroke-width="0.5"/>
<rect x="1538.68" y="554.90" width="6.90" height="54.00" fill="#999999" stroke="#949494" stroke-width="0.5"/>
<rect x="1538.68" y="528.00" width="6.90" height="26.90" fill="#c55e58" stroke="#c4544f" stroke-width="0.5"/>
<rect x="1538.68" y="508.00" width="6.90" height="20.00" fill="#e97aab" stroke="#e8639c" stroke-width="0.5"/>
<rect x="1549.05" y="934.90" width="6.90" height="12.50" fill="#e41a1c" stroke="#e3100f" stroke-width="0.5"/>
<rect x="1549.05" y="725.90" width="6.90" height="209.00" fill="#3a85a8" stroke="#2e7fab" stroke-width="0.5"/>
<rect x="1549.05" y="719.90" width="6.90" height="6.00" fill="#629363" stroke="#58905e" stroke-width="0.5"/>
<rect x="1549.05" y="603.00" width="6.90" height="116.90" fill="#bb852b" stroke="#b77c1d" stroke-width="0.5"/>
<rect x="1549.05" y="549.00" width="6.90" height="54.00" fill="#999999" stroke="#949494" stroke-width="0.5"/>
<rect x="1549.05" y="526.00" width="6.90" height="23.00" fill="#c55e58" stroke="#c4544f" stroke-width="0.5"/>
<rect x="1549.05" y="507.00" width="6.90" height="19.00" fill="#e97aab" stroke="#e8639c" stroke-width="0.5"/>
<rect x="1559.09" y="939.00" width="6.90" height="8.40" fill="#e41a1c" stroke="#e3100f" stroke-width="0.5"/>
<rect x="1559.09" y="764.00" width="6.90" height="175.00" fill="#3a85a8" stroke="#2e7fab" stroke-width="0.5"/>
<rect x="1559.09" y="758.90" width="6.90" height="5.10" fill="#629363" stroke="#58905e" stroke-width="0.5"/>
<rect x="1559.09" y="616.00" width="6.90" height="142.90" fill="#bb852b" stroke="#b77c1d" stroke-width="0.5"/>
<rect x="1559.09" y="564.00" width="6.90" height="52.00" fill="#999999" stroke="#949494" stroke-width="0.5"/>
<rect x="1559.09" y="538.90" width="6.90" height="25.10" fill="#c55e58" stroke="#c4544f" stroke-width="0.5"/>
<rect x="1559.09" y="522.00" width="6.90" height="16.90" fill="#e97aab" stroke="#e8639c" stroke-width="0.5"/>
<rect x="1569.46" y="937.80" width="6.90" height="9.60" fill="#e41a1c" stroke="#e3100f" stroke-width="0.5"/>
<rect x="1569.46" y="779.90" width="6.90" height="157.90" fill="#3a85a8" stroke="#2e7fab" stroke-width="0.5"/>
<rect x="1569.46" y="776.00" width="6.90" height="3.90" fill="#629363" stroke="#58905e" stroke-width="0.5"/>
<rect x="1569.46" y="775.00" width="6.90" height="1.00" fill="#fecb23" stroke="#ffc50f" stroke-width="0.5"/>
<rect x="1569.46" y="637.00" width="6.90" height="138.00" fill="#bb852b" stroke="#b77c1d" stroke-width="0.5"/>
<rect x="1569.46" y="596.00" width="6.90" height="41.00" fill="#999999" stroke="#949494" stroke-width="0.5"/>
<rect x="1569.46" y="568.90" width="6.90" height="27.10" fill="#c55e58" stroke="#c4544f" stroke-width="0.5"/>
<rect x="1569.46" y="548.10" width="6.90" height="20.80" fill="#e97aab" stroke="#e8639c" stroke-width="0.5"/>
<rect x="1579.49" y="936.00" width="6.90" height="11.40" fill="#e41a1c" stroke="#e3100f" stroke-width="0.5"/>
<rect x="1579.49" y="785.00" width="6.90" height="151.00" fill="#3a85a8" stroke="#2e7fab" stroke-width="0.5"/>
<rect x="1579.49" y="779.00" width="6.90" height="6.00" fill="#629363" stroke="#58905e" stroke-width="0.5"/>
<rect x="1579.49" y="778.00" width="6.90" height="1.00" fill="#fecb23" stroke="#ffc50f" stroke-width="0.5"/>
<rect x="1579.49" y="648.00" width="6.90" height="130.00" fill="#bb852b" stroke="#b77c1d" stroke-width="0.5"/>
<rect x="1579.49" y="604.00" width="6.90" height="44.00" fill="#999999" stroke="#949494" stroke-width="0.5"/>
<rect x="1579.49" y="579.90" width="6.90" height="24.10" fill="#c55e58" stroke="#c4544f" stroke-width="0.5"/>
<rect x="1579.49" y="554.00" width="6.90" height="25.90" fill="#e97aab" stroke="#e8639c" stroke-width="0.5"/>
<rect x="1589.86" y="939.00" width="6.90" height="8.40" fill="#e41a1c" stroke="#e3100f" stroke-width="0.5"/>
<rect x="1589.86" y="809.00" width="6.90" height="130.00" fill="#3a85a8" stroke="#2e7fab" stroke-width="0.5"/>
<rect x="1589.86" y="803.90" width="6.90" height="5.10" fill="#629363" stroke="#58905e" stroke-width="0.5"/>
<rect x="1589.86" y="802.90" width="6.90" height="1.00" fill="#fecb23" stroke="#ffc50f" stroke-width="0.5"/>
<rect x="1589.86" y="670.80" width="6.90" height="132.10" fill="#bb852b" stroke="#b77c1d" stroke-width="0.5"/>
<rect x="1589.86" y="628.00" width="6.90" height="42.80" fill="#999999" stroke="#949494" stroke-width="0.5"/>
<rect x="1589.86" y="601.90" width="6.90" height="26.10" fill="#c55e58" stroke="#c4544f" stroke-width="0.5"/>
<rect x="1589.86" y="576.00" width="6.90" height="25.90" fill="#e97aab" stroke="#e8639c" stroke-width="0.5"/>
<rect x="1600.23" y="937.00" width="6.90" height="10.40" fill="#e41a1c" stroke="#e3100f" stroke-width="0.5"/>
<rect x="1600.23" y="806.00" width="6.90" height="131.00" fill="#3a85a8" stroke="#2e7fab" stroke-width="0.5"/>
<rect x="1600.23" y="801.00" width="6.90" height="5.00" fill="#629363" stroke="#58905e" stroke-width="0.5"/>
<rect x="1600.23" y="800.00" width="6.90" height="1.00" fill="#fecb23" stroke="#ffc50f" stroke-width="0.5"/>
<rect x="1600.23" y="685.70" width="6.90" height="114.30" fill="#bb852b" stroke="#b77c1d" stroke-width="0.5"/>
<rect x="1600.23" y="638.00" width="6.90" height="47.70" fill="#999999" stroke="#949494" stroke-width="0.5"/>
<rect x="1600.23" y="611.90" width="6.90" height="26.10" fill="#c55e58" stroke="#c4544f" stroke-width="0.5"/>
<rect x="1600.23" y="580.90" width="6.90" height="31.00" fill="#e97aab" stroke="#e8639c" stroke-width="0.5"/>
<rect x="1610.27" y="942.00" width="6.90" height="5.40" fill="#e41a1c" stroke="#e3100f" stroke-width="0.5"/>
<rect x="1610.27" y="802.90" width="6.90" height="139.10" fill="#3a85a8" stroke="#2e7fab" stroke-width="0.5"/>
<rect x="1610.27" y="799.00" width="6.90" height="3.90" fill="#629363" stroke="#58905e" stroke-width="0.5"/>
<rect x="1610.27" y="798.00" width="6.90" height="1.00" fill="#fecb23" stroke="#ffc50f" stroke-width="0.5"/>
<rect x="1610.27" y="662.90" width="6.90" height="135.10" fill="#bb852b" stroke="#b77c1d" stroke-width="0.5"/>
<rect x="1610.27" y="619.00" width="6.90" height="43.90" fill="#999999" stroke="#949494" stroke-width="0.5"/>
<rect x="1610.27" y="590.90" width="6.90" height="28.10" fill="#c55e58" stroke="#c4544f" stroke-width="0.5"/>
<rect x="1610.27" y="569.90" width="6.90" height="21.00" fill="#e97aab" stroke="#e8639c" stroke-width="0.5"/>
<rect x="1620.64" y="934.90" width="6.90" height="12.50" fill="#e41a1c" stroke="#e3100f" stroke-width="0.5"/>
<rect x="1620.64" y="783.00" width="6.90" height="151.90" fill="#3a85a8" stroke="#2e7fab" stroke-width="0.5"/>
<rect x="1620.64" y="777.00" width="6.90" height="6.00" fill="#629363" stroke="#58905e" stroke-width="0.5"/>
<rect x="1620.64" y="775.00" width="6.90" height="2.00" fill="#fecb23" stroke="#ffc50f" stroke-width="0.5"/>
<rect x="1620.64" y="650.80" width="6.90" height="124.20" fill="#bb852b" stroke="#b77c1d" stroke-width="0.5"/>
<rect x="1620.64" y="604.00" width="6.90" height="46.80" fill="#999999" stroke="#949494" stroke-width="0.5"/>
<rect x="1620.64" y="572.00" width="6.90" height="32.00" fill="#c55e58" stroke="#c4544f" stroke-width="0.5"/>
<rect x="1620.64" y="548.10" width="6.90" height="23.90" fill="#e97aab" stroke="#e8639c" stroke-width="0.5"/>
<rect x="1630.68" y="936.00" width="6.90" height="11.40" fill="#e41a1c" stroke="#e3100f" stroke-width="0.5"/>
<rect x="1630.68" y="783.00" width="6.90" height="153.00" fill="#3a85a8" stroke="#2e7fab" stroke-width="0.5"/>
<rect x="1630.68" y="778.00" width="6.90" height="5.00" fill="#629363" stroke="#58905e" stroke-width="0.5"/>
<rect x="1630.68" y="777.00" width="6.90" height="1.00" fill="#fecb23" stroke="#ffc50f" stroke-width="0.5"/>
<rect x="1630.68" y="660.80" width="6.90" height="116.20" fill="#bb852b" stroke="#b77c1d" stroke-width="0.5"/>
<rect x="1630.68" y="620.10" width="6.90" height="40.70" fill="#999999" stroke="#949494" stroke-width="0.5"/>
<rect x="1630.68" y="592.90" width="6.90" height="27.20" fill="#c55e58" stroke="#c4544f" stroke-width="0.5"/>
<rect x="1630.68" y="573.00" width="6.90" height="19.90" fill="#e97aab" stroke="#e8639c" stroke-width="0.5"/>
<rect x="1641.05" y="937.00" width="6.90" height="10.40" fill="#e41a1c" stroke="#e3100f" stroke-width="0.5"/>
<rect x="1641.05" y="764.00" width="6.90" height="173.00" fill="#3a85a8" stroke="#2e7fab" stroke-width="0.5"/>
<rect x="1641.05" y="760.00" width="6.90" height="4.00" fill="#629363" stroke="#58905e" stroke-width="0.5"/>
<rect x="1641.05" y="756.90" width="6.90" height="3.10" fill="#fecb23" stroke="#ffc50f" stroke-width="0.5"/>
<rect x="1641.05" y="629.00" width="6.90" height="127.90" fill="#bb852b" stroke="#b77c1d" stroke-width="0.5"/>
<rect x="1641.05" y="587.90" width="6.90" height="41.10" fill="#999999" stroke="#949494" stroke-width="0.5"/>
<rect x="1641.05" y="554.00" width="6.90" height="33.90" fill="#c55e58" stroke="#c4544f" stroke-width="0.5"/>
<rect x="1641.05" y="531.00" width="6.90" height="23.00" fill="#e97aab" stroke="#e8639c" stroke-width="0.5"/>
<rect x="1651.42" y="937.80" width="6.90" height="9.60" fill="#e41a1c" stroke="#e3100f" stroke-width="0.5"/>
<rect x="1651.42" y="760.00" width="6.90" height="177.80" fill="#3a85a8" stroke="#2e7fab" stroke-width="0.5"/>
<rect x="1651.42" y="756.00" width="6.90" height="4.00" fill="#629363" stroke="#58905e" stroke-width="0.5"/>
<rect x="1651.42" y="671.80" width="6.90" height="84.20" fill="#bb852b" stroke="#b77c1d" stroke-width="0.5"/>
<rect x="1651.42" y="621.90" width="6.90" height="49.90" fill="#999999" stroke="#949494" stroke-width="0.5"/>
<rect x="1651.42" y="588.90" width="6.90" height="33.00" fill="#c55e58" stroke="#c4544f" stroke-width="0.5"/>
<rect x="1651.42" y="573.00" width="6.90" height="15.90" fill="#e97aab" stroke="#e8639c" stroke-width="0.5"/>
<rect x="1660.78" y="934.90" width="6.90" height="12.50" fill="#e41a1c" stroke="#e3100f" stroke-width="0.5"/>
<rect x="1660.78" y="758.90" width="6.90" height="176.00" fill="#3a85a8" stroke="#2e7fab" stroke-width="0.5"/>
<rect x="1660.78" y="753.00" width="6.90" height="5.90" fill="#629363" stroke="#58905e" stroke-width="0.5"/>
<rect x="1660.78" y="750.90" width="6.90" height="2.10" fill="#fecb23" stroke="#ffc50f" stroke-width="0.5"/>
<rect x="1660.78" y="620.90" width="6.90" height="130.00" fill="#bb852b" stroke="#b77c1d" stroke-width="0.5"/>
<rect x="1660.78" y="573.00" width="6.90" height="47.90" fill="#999999" stroke="#949494" stroke-width="0.5"/>
<rect x="1660.78" y="549.90" width="6.90" height="23.10" fill="#c55e58" stroke="#c4544f" stroke-width="0.5"/>
<rect x="1660.78" y="525.90" width="6.90" height="24.00" fill="#e97aab" stroke="#e8639c" stroke-width="0.5"/>
<rect x="1671.15" y="942.00" width="6.90" height="5.40" fill="#e41a1c" stroke="#e3100f" stroke-width="0.5"/>
<rect x="1671.15" y="784.00" width="6.90" height="158.00" fill="#3a85a8" stroke="#2e7fab" stroke-width="0.5"/>
<rect x="1671.15" y="779.00" width="6.90" height="5.00" fill="#629363" stroke="#58905e" stroke-width="0.5"/>
<rect x="1671.15" y="777.00" width="6.90" height="2.00" fill="#fecb23" stroke="#ffc50f" stroke-width="0.5"/>
<rect x="1671.15" y="645.90" width="6.90" height="131.10" fill="#bb852b" stroke="#b77c1d" stroke-width="0.5"/>
<rect x="1671.15" y="599.10" width="6.90" height="46.80" fill="#999999" stroke="#949494" stroke-width="0.5"/>
<rect x="1671.15" y="573.00" width="6.90" height="26.10" fill="#c55e58" stroke="#c4544f" stroke-width="0.5"/>
<rect x="1671.15" y="548.90" width="6.90" height="24.10" fill="#e97aab" stroke="#e8639c" stroke-width="0.5"/>
<rect x="1681.19" y="934.90" width="6.90" height="12.50" fill="#e41a1c" stroke="#e3100f" stroke-width="0.5"/>
<rect x="1681.19" y="801.00" width="6.90" height="133.90" fill="#3a85a8" stroke="#2e7fab" stroke-width="0.5"/>
<rect x="1681.19" y="794.00" width="6.90" height="7.00" fill="#629363" stroke="#58905e" stroke-width="0.5"/>
<rect x="1681.19" y="792.00" width="6.90" height="2.00" fill="#fecb23" stroke="#ffc50f" stroke-width="0.5"/>
<rect x="1681.19" y="654.90" width="6.90" height="137.10" fill="#bb852b" stroke="#b77c1d" stroke-width="0.5"/>
<rect x="1681.19" y="601.90" width="6.90" height="53.00" fill="#999999" stroke="#949494" stroke-width="0.5"/>
<rect x="1681.19" y="576.00" width="6.90" height="25.90" fill="#c55e58" stroke="#c4544f" stroke-width="0.5"/>
<rect x="1681.19" y="549.90" width="6.90" height="26.10" fill="#e97aab" stroke="#e8639c" stroke-width="0.5"/>
<rect x="1691.56" y="945.10" width="6.90" height="2.30" fill="#e41a1c" stroke="#e3100f" stroke-width="0.5"/>
<rect x="1691.56" y="809.00" width="6.90" height="136.10" fill="#3a85a8" stroke="#2e7fab" stroke-width="0.5"/>
<rect x="1691.56" y="804.90" width="6.90" height="4.10" fill="#629363" stroke="#58905e" stroke-width="0.5"/>
<rect x="1691.56" y="803.90" width="6.90" height="1.00" fill="#fecb23" stroke="#ffc50f" stroke-width="0.5"/>
<rect x="1691.56" y="659.80" width="6.90" height="144.10" fill="#bb852b" stroke="#b77c1d" stroke-width="0.5"/>
<rect x="1691.56" y="606.00" width="6.90" height="53.80" fill="#999999" stroke="#949494" stroke-width="0.5"/>
<rect x="1691.56" y="584.00" width="6.90" height="22.00" fill="#c55e58" stroke="#c4544f" stroke-width="0.5"/>
<rect x="1691.56" y="558.10" width="6.90" height="25.90" fill="#e97aab" stroke="#e8639c" stroke-width="0.5"/>
<rect x="1701.60" y="942.00" width="6.90" height="5.40" fill="#e41a1c" stroke="#e3100f" stroke-width="0.5"/>
<rect x="1701.60" y="810.90" width="6.90" height="131.10" fill="#3a85a8" stroke="#2e7fab" stroke-width="0.5"/>
<rect x="1701.60" y="806.00" width="6.90" height="4.90" fill="#629363" stroke="#58905e" stroke-width="0.5"/>
<rect x="1701.60" y="803.90" width="6.90" height="2.10" fill="#fecb23" stroke="#ffc50f" stroke-width="0.5"/>
<rect x="1701.60" y="671.80" width="6.90" height="132.10" fill="#bb852b" stroke="#b77c1d" stroke-width="0.5"/>
<rect x="1701.60" y="622.90" width="6.90" height="48.90" fill="#999999" stroke="#949494" stroke-width="0.5"/>
<rect x="1701.60" y="598.00" width="6.90" height="24.90" fill="#c55e58" stroke="#c4544f" stroke-width="0.5"/>
<rect x="1701.60" y="577.00" width="6.90" height="21.00" fill="#e97aab" stroke="#e8639c" stroke-width="0.5"/>
<rect x="1711.97" y="942.00" width="6.90" height="5.40" fill="#e41a1c" stroke="#e3100f" stroke-width="0.5"/>
<rect x="1711.97" y="814.00" width="6.90" height="128.00" fill="#3a85a8" stroke="#2e7fab" stroke-width="0.5"/>
<rect x="1711.97" y="810.00" width="6.90" height="4.00" fill="#629363" stroke="#58905e" stroke-width="0.5"/>
<rect x="1711.97" y="808.00" width="6.90" height="2.00" fill="#fecb23" stroke="#ffc50f" stroke-width="0.5"/>
<rect x="1711.97" y="686.70" width="6.90" height="121.30" fill="#bb852b" stroke="#b77c1d" stroke-width="0.5"/>
<rect x="1711.97" y="644.90" width="6.90" height="41.80" fill="#999999" stroke="#949494" stroke-width="0.5"/>
<rect x="1711.97" y="621.90" width="6.90" height="23.00" fill="#c55e58" stroke="#c4544f" stroke-width="0.5"/>
<rect x="1711.97" y="596.00" width="6.90" height="25.90" fill="#e97aab" stroke="#e8639c" stroke-width="0.5"/>
<rect x="1722.34" y="940.90" width="6.90" height="6.50" fill="#e41a1c" stroke="#e3100f" stroke-width="0.5"/>
<rect x="1722.34" y="804.90" width="6.90" height="136.00" fill="#3a85a8" stroke="#2e7fab" stroke-width="0.5"/>
<rect x="1722.34" y="800.00" width="6.90" height="4.90" fill="#629363" stroke="#58905e" stroke-width="0.5"/>
<rect x="1722.34" y="799.00" width="6.90" height="1.00" fill="#fecb23" stroke="#ffc50f" stroke-width="0.5"/>
<rect x="1722.34" y="669.80" width="6.90" height="129.20" fill="#bb852b" stroke="#b77c1d" stroke-width="0.5"/>
<rect x="1722.34" y="626.00" width="6.90" height="43.80" fill="#999999" stroke="#949494" stroke-width="0.5"/>
<rect x="1722.34" y="602.90" width="6.90" height="23.10" fill="#c55e58" stroke="#c4544f" stroke-width="0.5"/>
<rect x="1722.34" y="583.00" width="6.90" height="19.90" fill="#e97aab" stroke="#e8639c" stroke-width="0.5"/>
<rect x="1732.37" y="942.00" width="6.90" height="5.40" fill="#e41a1c" stroke="#e3100f" stroke-width="0.5"/>
<rect x="1732.37" y="794.90" width="6.90" height="147.10" fill="#3a85a8" stroke="#2e7fab" stroke-width="0.5"/>
<rect x="1732.37" y="790.00" width="6.90" height="4.90" fill="#629363" stroke="#58905e" stroke-width="0.5"/>
<rect x="1732.37" y="788.90" width="6.90" height="1.10" fill="#fecb23" stroke="#ffc50f" stroke-width="0.5"/>
<rect x="1732.37" y="670.80" width="6.90" height="118.10" fill="#bb852b" stroke="#b77c1d" stroke-width="0.5"/>
<rect x="1732.37" y="625.00" width="6.90" height="45.80" fill="#999999" stroke="#949494" stroke-width="0.5"/>
<rect x="1732.37" y="600.90" width="6.90" height="24.10" fill="#c55e58" stroke="#c4544f" stroke-width="0.5"/>
<rect x="1732.37" y="580.90" width="6.90" height="20.00" fill="#e97aab" stroke="#e8639c" stroke-width="0.5"/>
<rect x="1742.74" y="942.00" width="6.90" height="5.40" fill="#e41a1c" stroke="#e3100f" stroke-width="0.5"/>
<rect x="1742.74" y="767.00" width="6.90" height="175.00" fill="#3a85a8" stroke="#2e7fab" stroke-width="0.5"/>
<rect x="1742.74" y="763.90" width="6.90" height="3.10" fill="#629363" stroke="#58905e" stroke-width="0.5"/>
<rect x="1742.74" y="762.00" width="6.90" height="1.90" fill="#fecb23" stroke="#ffc50f" stroke-width="0.5"/>
<rect x="1742.74" y="651.90" width="6.90" height="110.10" fill="#bb852b" stroke="#b77c1d" stroke-width="0.5"/>
<rect x="1742.74" y="606.00" width="6.90" height="45.90" fill="#999999" stroke="#949494" stroke-width="0.5"/>
<rect x="1742.74" y="580.90" width="6.90" height="25.10" fill="#c55e58" stroke="#c4544f" stroke-width="0.5"/>
<rect x="1742.74" y="563.00" width="6.90" height="17.90" fill="#e97aab" stroke="#e8639c" stroke-width="0.5"/>
<rect x="1752.78" y="937.00" width="6.90" height="10.40" fill="#e41a1c" stroke="#e3100f" stroke-width="0.5"/>
<rect x="1752.78" y="760.00" width="6.90" height="177.00" fill="#3a85a8" stroke="#2e7fab" stroke-width="0.5"/>
<rect x="1752.78" y="756.00" width="6.90" height="4.00" fill="#629363" stroke="#58905e" stroke-width="0.5"/>
<rect x="1752.78" y="754.00" width="6.90" height="2.00" fill="#fecb23" stroke="#ffc50f" stroke-width="0.5"/>
<rect x="1752.78" y="621.90" width="6.90" height="132.10" fill="#bb852b" stroke="#b77c1d" stroke-width="0.5"/>
<rect x="1752.78" y="568.90" width="6.90" height="53.00" fill="#999999" stroke="#949494" stroke-width="0.5"/>
<rect x="1752.78" y="536.10" width="6.90" height="32.80" fill="#c55e58" stroke="#c4544f" stroke-width="0.5"/>
<rect x="1752.78" y="514.10" width="6.90" height="22.00" fill="#e97aab" stroke="#e8639c" stroke-width="0.5"/>
<rect x="1763.15" y="938.90" width="6.90" height="8.50" fill="#e41a1c" stroke="#e3100f" stroke-width="0.5"/>
<rect x="1763.15" y="748.90" width="6.90" height="190.00" fill="#3a85a8" stroke="#2e7fab" stroke-width="0.5"/>
<rect x="1763.15" y="745.00" width="6.90" height="3.90" fill="#629363" stroke="#58905e" stroke-width="0.5"/>
<rect x="1763.15" y="744.00" width="6.90" height="1.00" fill="#fecb23" stroke="#ffc50f" stroke-width="0.5"/>
<rect x="1763.15" y="631.90" width="6.90" height="112.10" fill="#bb852b" stroke="#b77c1d" stroke-width="0.5"/>
<rect x="1763.15" y="575.00" width="6.90" height="56.90" fill="#999999" stroke="#949494" stroke-width="0.5"/>
<rect x="1763.15" y="549.90" width="6.90" height="25.10" fill="#c55e58" stroke="#c4544f" stroke-width="0.5"/>
<rect x="1763.15" y="530.00" width="6.90" height="19.90" fill="#e97aab" stroke="#e8639c" stroke-width="0.5"/>
<rect x="1773.52" y="938.90" width="6.90" height="8.50" fill="#e41a1c" stroke="#e3100f" stroke-width="0.5"/>
<rect x="1773.52" y="763.00" width="6.90" height="175.90" fill="#3a85a8" stroke="#2e7fab" stroke-width="0.5"/>
<rect x="1773.52" y="758.90" width="6.90" height="4.10" fill="#629363" stroke="#58905e" stroke-width="0.5"/>
<rect x="1773.52" y="757.90" width="6.90" height="1.00" fill="#fecb23" stroke="#ffc50f" stroke-width="0.5"/>
<rect x="1773.52" y="631.90" width="6.90" height="126.00" fill="#bb852b" stroke="#b77c1d" stroke-width="0.5"/>
<rect x="1773.52" y="572.00" width="6.90" height="59.90" fill="#999999" stroke="#949494" stroke-width="0.5"/>
<rect x="1773.52" y="543.00" width="6.90" height="29.00" fill="#c55e58" stroke="#c4544f" stroke-width="0.5"/>
<rect x="1773.52" y="527.90" width="6.90" height="15.10" fill="#e97aab" stroke="#e8639c" stroke-width="0.5"/>
<rect x="1782.89" y="938.90" width="6.90" height="8.50" fill="#e41a1c" stroke="#e3100f" stroke-width="0.5"/>
<rect x="1782.89" y="782.00" width="6.90" height="156.90" fill="#3a85a8" stroke="#2e7fab" stroke-width="0.5"/>
<rect x="1782.89" y="777.00" width="6.90" height="5.00" fill="#629363" stroke="#58905e" stroke-width="0.5"/>
<rect x="1782.89" y="651.90" width="6.90" height="125.10" fill="#bb852b" stroke="#b77c1d" stroke-width="0.5"/>
<rect x="1782.89" y="588.90" width="6.90" height="63.00" fill="#999999" stroke="#949494" stroke-width="0.5"/>
<rect x="1782.89" y="565.00" width="6.90" height="23.90" fill="#c55e58" stroke="#c4544f" stroke-width="0.5"/>
<rect x="1782.89" y="551.00" width="6.90" height="14.00" fill="#e97aab" stroke="#e8639c" stroke-width="0.5"/>
<rect x="1793.26" y="940.00" width="6.90" height="7.40" fill="#e41a1c" stroke="#e3100f" stroke-width="0.5"/>
<rect x="1793.26" y="791.00" width="6.90" height="149.00" fill="#3a85a8" stroke="#2e7fab" stroke-width="0.5"/>
<rect x="1793.26" y="786.00" width="6.90" height="5.00" fill="#629363" stroke="#58905e" stroke-width="0.5"/>
<rect x="1793.26" y="784.00" width="6.90" height="2.00" fill="#fecb23" stroke="#ffc50f" stroke-width="0.5"/>
<rect x="1793.26" y="625.00" width="6.90" height="159.00" fill="#bb852b" stroke="#b77c1d" stroke-width="0.5"/>
<rect x="1793.26" y="566.90" width="6.90" height="58.10" fill="#999999" stroke="#949494" stroke-width="0.5"/>
<rect x="1793.26" y="535.10" width="6.90" height="31.80" fill="#c55e58" stroke="#c4544f" stroke-width="0.5"/>
<rect x="1793.26" y="520.00" width="6.90" height="15.10" fill="#e97aab" stroke="#e8639c" stroke-width="0.5"/>
<rect x="1803.29" y="940.90" width="6.90" height="6.50" fill="#e41a1c" stroke="#e3100f" stroke-width="0.5"/>
<rect x="1803.29" y="786.00" width="6.90" height="154.90" fill="#3a85a8" stroke="#2e7fab" stroke-width="0.5"/>
<rect x="1803.29" y="781.10" width="6.90" height="4.90" fill="#629363" stroke="#58905e" stroke-width="0.5"/>
<rect x="1803.29" y="779.00" width="6.90" height="2.10" fill="#fecb23" stroke="#ffc50f" stroke-width="0.5"/>
<rect x="1803.29" y="643.90" width="6.90" height="135.10" fill="#bb852b" stroke="#b77c1d" stroke-width="0.5"/>
<rect x="1803.29" y="591.90" width="6.90" height="52.00" fill="#999999" stroke="#949494" stroke-width="0.5"/>
<rect x="1803.29" y="562.00" width="6.90" height="29.90" fill="#c55e58" stroke="#c4544f" stroke-width="0.5"/>
<rect x="1803.29" y="538.90" width="6.90" height="23.10" fill="#e97aab" stroke="#e8639c" stroke-width="0.5"/>
<rect x="1813.66" y="942.00" width="6.90" height="5.40" fill="#e41a1c" stroke="#e3100f" stroke-width="0.5"/>
<rect x="1813.66" y="817.00" width="6.90" height="125.00" fill="#3a85a8" stroke="#2e7fab" stroke-width="0.5"/>
<rect x="1813.66" y="813.00" width="6.90" height="4.00" fill="#629363" stroke="#58905e" stroke-width="0.5"/>
<rect x="1813.66" y="810.90" width="6.90" height="2.10" fill="#fecb23" stroke="#ffc50f" stroke-width="0.5"/>
<rect x="1813.66" y="670.80" width="6.90" height="140.10" fill="#bb852b" stroke="#b77c1d" stroke-width="0.5"/>
<rect x="1813.66" y="621.90" width="6.90" height="48.90" fill="#999999" stroke="#949494" stroke-width="0.5"/>
<rect x="1813.66" y="597.00" width="6.90" height="24.90" fill="#c55e58" stroke="#c4544f" stroke-width="0.5"/>
<rect x="1813.66" y="570.90" width="6.90" height="26.10" fill="#e97aab" stroke="#e8639c" stroke-width="0.5"/>
<rect x="1823.70" y="942.00" width="6.90" height="5.40" fill="#e41a1c" stroke="#e3100f" stroke-width="0.5"/>
<rect x="1823.70" y="817.90" width="6.90" height="124.10" fill="#3a85a8" stroke="#2e7fab" stroke-width="0.5"/>
<rect x="1823.70" y="814.00" width="6.90" height="3.90" fill="#629363" stroke="#58905e" stroke-width="0.5"/>
<rect x="1823.70" y="810.00" width="6.90" height="4.00" fill="#fecb23" stroke="#ffc50f" stroke-width="0.5"/>
<rect x="1823.70" y="668.00" width="6.90" height="142.00" fill="#bb852b" stroke="#b77c1d" stroke-width="0.5"/>
<rect x="1823.70" y="625.00" width="6.90" height="43.00" fill="#999999" stroke="#949494" stroke-width="0.5"/>
<rect x="1823.70" y="599.10" width="6.90" height="25.90" fill="#c55e58" stroke="#c4544f" stroke-width="0.5"/>
<rect x="1823.70" y="578.90" width="6.90" height="20.20" fill="#e97aab" stroke="#e8639c" stroke-width="0.5"/>
<rect x="1834.07" y="943.00" width="6.90" height="4.40" fill="#e41a1c" stroke="#e3100f" stroke-width="0.5"/>
<rect x="1834.07" y="806.00" width="6.90" height="137.00" fill="#3a85a8" stroke="#2e7fab" stroke-width="0.5"/>
<rect x="1834.07" y="802.00" width="6.90" height="4.00" fill="#629363" stroke="#58905e" stroke-width="0.5"/>
<rect x="1834.07" y="800.00" width="6.90" height="2.00" fill="#fecb23" stroke="#ffc50f" stroke-width="0.5"/>
<rect x="1834.07" y="647.00" width="6.90" height="153.00" fill="#bb852b" stroke="#b77c1d" stroke-width="0.5"/>
<rect x="1834.07" y="601.90" width="6.90" height="45.10" fill="#999999" stroke="#949494" stroke-width="0.5"/>
<rect x="1834.07" y="576.00" width="6.90" height="25.90" fill="#c55e58" stroke="#c4544f" stroke-width="0.5"/>
<rect x="1834.07" y="554.00" width="6.90" height="22.00" fill="#e97aab" stroke="#e8639c" stroke-width="0.5"/>
<rect x="1844.44" y="942.00" width="6.90" height="5.40" fill="#e41a1c" stroke="#e3100f" stroke-width="0.5"/>
<rect x="1844.44" y="815.00" width="6.90" height="127.00" fill="#3a85a8" stroke="#2e7fab" stroke-width="0.5"/>
<rect x="1844.44" y="810.90" width="6.90" height="4.10" fill="#629363" stroke="#58905e" stroke-width="0.5"/>
<rect x="1844.44" y="810.00" width="6.90" height="0.90" fill="#fecb23" stroke="#ffc50f" stroke-width="0.5"/>
<rect x="1844.44" y="661.80" width="6.90" height="148.20" fill="#bb852b" stroke="#b77c1d" stroke-width="0.5"/>
<rect x="1844.44" y="611.90" width="6.90" height="49.90" fill="#999999" stroke="#949494" stroke-width="0.5"/>
<rect x="1844.44" y="588.90" width="6.90" height="23.00" fill="#c55e58" stroke="#c4544f" stroke-width="0.5"/>
<rect x="1844.44" y="562.00" width="6.90" height="26.90" fill="#e97aab" stroke="#e8639c" stroke-width="0.5"/></g>
<line x1="631" x2="1853" y1="947.4" y2="947.4" stroke="#444" stroke-width="1.3"/>
<g font-size="12.5" fill="#444"><text x="614.9" y="854.4" textLength="14.6" lengthAdjust="spacingAndGlyphs">5k</text><text x="607.4" y="757.4" textLength="22.1" lengthAdjust="spacingAndGlyphs">10k</text><text x="607.4" y="660.4" textLength="22.1" lengthAdjust="spacingAndGlyphs">15k</text><text x="607.4" y="563.4" textLength="22.1" lengthAdjust="spacingAndGlyphs">20k</text><text x="607.4" y="466.4" textLength="22.1" lengthAdjust="spacingAndGlyphs">25k</text><text x="607.4" y="369.4" textLength="22.1" lengthAdjust="spacingAndGlyphs">30k</text><text x="622.7" y="951.4" textLength="6.8" lengthAdjust="spacingAndGlyphs">0</text><text x="651.7" y="960" textLength="30.6" lengthAdjust="spacingAndGlyphs">2013</text><text x="773.8" y="960" textLength="30.6" lengthAdjust="spacingAndGlyphs">2014</text><text x="895.9" y="960" textLength="30.6" lengthAdjust="spacingAndGlyphs">2015</text><text x="1018.0" y="960" textLength="30.6" lengthAdjust="spacingAndGlyphs">2016</text><text x="1140.4" y="960" textLength="30.6" lengthAdjust="spacingAndGlyphs">2017</text><text x="1262.6" y="960" textLength="30.6" lengthAdjust="spacingAndGlyphs">2018</text><text x="1384.7" y="960" textLength="30.6" lengthAdjust="spacingAndGlyphs">2019</text><text x="1506.8" y="960" textLength="30.6" lengthAdjust="spacingAndGlyphs">2020</text><text x="1629.2" y="960" textLength="30.6" lengthAdjust="spacingAndGlyphs">2021</text><text x="1751.3" y="960" textLength="30.6" lengthAdjust="spacingAndGlyphs">2022</text></g>
<text transform="translate(593.5,670.5) rotate(-90)" font-size="14" fill="#444" textLength="70.6" lengthAdjust="spacingAndGlyphs">Magnitude</text>
</svg>
<div class="t" style="left:74.33px;top:18.27px;font-size:17.4px;color:#fff;transform:scaleX(0.9744)">San Francisco Estuary POTW Data</div>
<div class="t" style="left:381.11px;top:18.39px;font-size:18.2px;color:#fff;transform:scaleX(0.8866)">OVERVIEW</div>
<div class="t" style="left:498.34px;top:18.39px;font-size:18.2px;color:#fff;transform:scaleX(0.9085)">BY POTW</div>
<div class="t" style="left:604.08px;top:18.39px;font-size:18.2px;color:#fff;transform:scaleX(0.9190)">BY SUBEMBAYMENT</div>
<div class="t" style="left:19.40px;top:73.03px;font-size:12.6px;color:#595959;transform:scaleX(1.0299)">View results</div>
<div class="t" style="left:46.87px;top:108.14px;font-size:18.5px;color:#333;transform:scaleX(1.0296)">Sub-embayment</div>
<div class="t" style="left:651.46px;top:108.14px;font-size:18.5px;color:#333;transform:scaleX(0.9407)">POTW</div>
<div class="t" style="left:1256.98px;top:108.44px;font-size:18.5px;color:#333;transform:scaleX(1.0212)">Parameter</div>
<div class="t" style="left:46.70px;top:217.44px;font-size:18.5px;color:#333;transform:scaleX(1.0049)">Stacked bar plot?</div>
<div class="t" style="left:651.38px;top:217.44px;font-size:18.5px;color:#333;transform:scaleX(1.0216)">Summarise annually?</div>
<div class="t" style="left:59.90px;top:147.14px;font-size:18.5px;color:#333;transform:scaleX(1.0000)">South Bay</div>
<div class="t" style="left:1269.97px;top:146.94px;font-size:18.5px;color:#333;transform:scaleX(1.0293)">DIN (kg/d)</div>
<div class="t" style="left:59.06px;top:256.04px;font-size:18.5px;color:#333;transform:scaleX(0.9379)">Yes</div>
<div class="t" style="left:664.55px;top:255.84px;font-size:18.5px;color:#333;transform:scaleX(1.0500)">No</div>
<div class="t" style="left:665.36px;top:144.24px;font-size:18.5px;color:#333;transform:scaleX(1.0402)">Burlingame</div>
<div class="t" style="left:775.80px;top:144.24px;font-size:18.5px;color:#333;transform:scaleX(0.8959)">EBDA</div>
<div class="t" style="left:833.45px;top:144.24px;font-size:18.5px;color:#333;transform:scaleX(1.0476)">Millbrae</div>
<div class="t" style="left:913.62px;top:144.24px;font-size:18.5px;color:#333;transform:scaleX(0.9818)">San Mateo</div>
<div class="t" style="left:1014.91px;top:144.24px;font-size:18.5px;color:#333;transform:scaleX(0.9865)">SFO Airport</div>
<div class="t" style="left:665.12px;top:170.84px;font-size:18.5px;color:#333;transform:scaleX(0.9802)">SFPUC Southeast Plant</div>
<div class="t" style="left:872.03px;top:170.84px;font-size:18.5px;color:#333;transform:scaleX(0.9671)">South SF</div>
<div class="t" style="left:959.93px;top:170.84px;font-size:18.5px;color:#333;transform:scaleX(0.8667)">SVCW</div>
</body></html>
